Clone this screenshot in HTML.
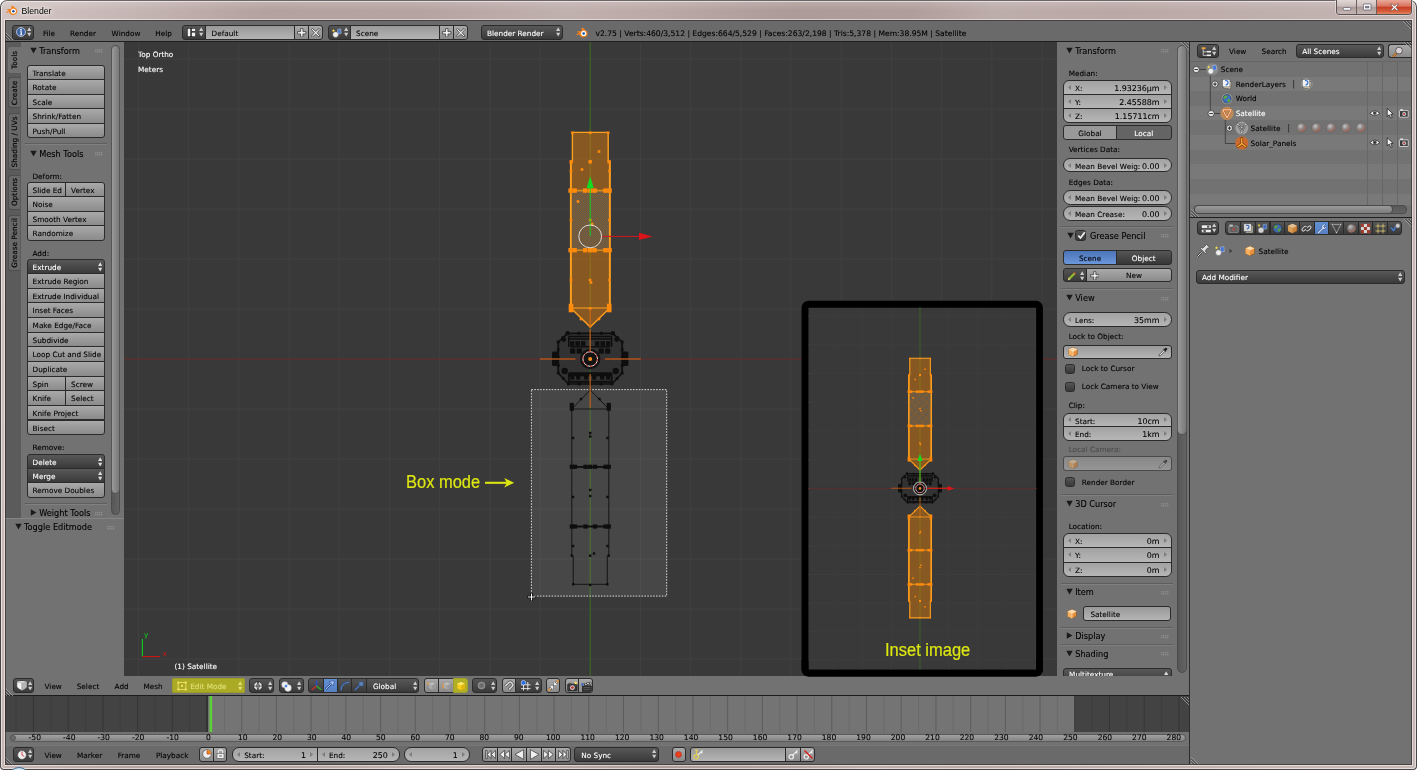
<!DOCTYPE html><html><head><meta charset="utf-8"><title>Blender</title><style>
html,body{margin:0;padding:0;background:#fff;}
body{width:1417px;height:770px;overflow:hidden;position:relative;font-family:"DejaVu Sans","Liberation Sans",sans-serif;}
div,svg{position:absolute;box-sizing:border-box;}
.t{font-size:7.3px;line-height:12px;white-space:nowrap;color:#000;-webkit-text-stroke:0.1px;}
.w{color:#fff;}
.g{color:#3c3c3c;}
.ph{font-size:8.2px;line-height:12px;white-space:nowrap;color:#000;-webkit-text-stroke:0.1px;}
.b,.m,.n,.f,.tg,.ts,.rd,.rs,.hb{border:1px solid #2b2b2b;font-size:7.3px;white-space:nowrap;overflow:hidden;color:#000;padding-left:5.1px;-webkit-text-stroke:0.1px;}
.b{background:linear-gradient(#a9a9a9,#8b8b8b);}
.m{background:linear-gradient(#585858,#3a3a3a);color:#fff;}
.n{background:linear-gradient(#a2a2a2,#b6b6b6);}
.f{background:linear-gradient(#999,#b4b4b4);}
.tg{background:#999;}
.ts{background:#646464;color:#fff;}
.rd{background:linear-gradient(#555,#373737);color:#fff;}
.rs{background:linear-gradient(#4c74b8,#6b97db);color:#000;}
.hb{background:linear-gradient(#555,#3a3a3a);}
.cb{border:1px solid #2b2b2b;background:linear-gradient(#555,#383838);border-radius:2.5px;}
.sep{height:1px;background:#5e5e5e;border-bottom:1px solid #808080;height:2px;}
.grip{width:9px;height:4px;background-image:radial-gradient(circle,#9a9a9a 0.5px,transparent 0.7px);background-size:2px 2px;opacity:.9}
</style></head><body><div id="win" style="left:0;top:0;width:1417px;height:770px;will-change:transform">
<div style="left:0;top:0;width:1417px;height:770px;border:1px solid #4a4545;border-top-color:#6e6666;border-radius:7px 7px 4px 4px;background:linear-gradient(180deg,rgba(255,255,255,.18) 0,rgba(255,255,255,0) 9px),linear-gradient(100deg,#d2c5c3 0px,#c9bab8 100px,#b4a2a0 260px,#b5a4a2 420px,#c0b0ae 560px,#bba9a7 650px,#ad9b99 780px,#b09e9c 900px,#bdadab 980px,#b9a8a6 1100px,#bfafad 1250px,#c6b7b5 1417px);box-shadow:inset 0 0 0 1px rgba(255,255,255,.55)"></div>
<div style="left:5px;top:20px;width:1407px;height:745px;box-shadow:0 0 0 1px rgba(255,255,255,.5);background:#727272"></div>
<svg style="left:6px;top:4.9px" width="13" height="11" viewBox="0 0 13 11"><path d="M6.2 0.6L9.9 3.6C11.6 5 11.6 7.6 10 9C8.4 10.4 5.8 10.4 4.2 9C3.4 8.3 3 7.4 3 6.5L0.8 8.2L0.3 7.2L3.1 5.1H1.2V4.1H4.6L5.9 3.1L5.2 2.5V1.4z" fill="#f5811e"/><circle cx="7.4" cy="6.2" r="2.5" fill="#fff"/><circle cx="7.4" cy="6.2" r="1.25" fill="#1b4f9c"/></svg>
<div style="left:21.5px;top:4.8px;font:8.7px/13px 'Liberation Sans',sans-serif;color:#000;text-shadow:0 0 4px #fff,0 0 6px #fff">Blender</div>
<div style="left:1336px;top:0;width:76px;height:15px;border:1px solid #5b5252;border-top:none;border-radius:0 0 4px 4px;overflow:hidden;box-shadow:0 0 0 1px rgba(255,255,255,.4)"><div style="left:0;top:0;width:20px;height:14px;background:linear-gradient(#e3d8d6,#c9bbb9 45%,#ab9a98 50%,#c5b6b4);border-right:1px solid #6b6161"></div><div style="left:20px;top:0;width:20px;height:14px;background:linear-gradient(#e3d8d6,#c9bbb9 45%,#ab9a98 50%,#c5b6b4);border-right:1px solid #6b6161"></div><div style="left:40px;top:0;width:35px;height:14px;background:linear-gradient(#e9a999,#d9715c 45%,#c43c22 50%,#d8623f 85%,#e08a66)"></div><svg style="left:0;top:0" width="75" height="14" viewBox="0 0 75 14"><rect x="6.2" y="7.6" width="7.6" height="2.6" rx="1" fill="#fff" stroke="#555066" stroke-width="0.7"/><rect x="26.4" y="4" width="7.6" height="6" rx="0.8" fill="#fff" stroke="#555066" stroke-width="0.7"/><rect x="28.6" y="6.2" width="3.4" height="1.8" fill="#8d8590" stroke="#555066" stroke-width="0.5"/><path d="M53.3 4.2L55.6 4.2L57.5 6.2L59.4 4.2L61.7 4.2L58.9 7.3L61.7 10.4L59.4 10.4L57.5 8.4L55.6 10.4L53.3 10.4L56.1 7.3z" fill="#fff" stroke="#5b3b3b" stroke-width="0.6"/></svg></div>
<div style="left:8px;top:766.5px;width:22px;height:22px;border-radius:50%;background:radial-gradient(circle at 50% 30%,#eef6fb,#b7d3e6 60%,#5a8fb8);border:1px solid #3f6f96"></div>
<div class="" style="left:5px;top:21px;width:1407px;height:20px;background:#6a6a6a"></div>
<div class="" style="left:5px;top:41px;width:1407px;height:1px;background:#1f1f1f"></div>
<svg style="left:5px;top:30px" width="10" height="10" viewBox="0 0 10 10"><path d="M0 2L8 10M0 5L5 10M0 8L2 10" stroke="#a4a4a4" stroke-width="0.8" fill="none"/><path d="M0 3.5L6.5 10M0 6.5L3.5 10" stroke="#333" stroke-width="0.8" fill="none"/></svg>
<svg style="left:1401px;top:21px" width="10" height="10" viewBox="0 0 10 10"><path d="M2 0L10 8M5 0L10 5M8 0L10 2" stroke="#a4a4a4" stroke-width="0.8" fill="none"/><path d="M3.5 0L10 6.5M6.5 0L10 3.5" stroke="#333" stroke-width="0.8" fill="none"/></svg>
<div class="hb" style="left:12px;top:25px;width:22px;height:14.5px;line-height:15.2px;border-radius:3px;padding:0"><svg style="left:2.5px;top:1.4px" width="10" height="10" viewBox="0 0 10 10"><circle cx="5" cy="5" r="4.5" fill="#3c62a6" stroke="#cfd8ea" stroke-width="0.8"/><circle cx="5" cy="2.7" r="0.9" fill="#fff"/><path d="M4.1 4.2H5.8V7.6H6.5V8.3H3.8V7.6H4.6V4.9H4.1z" fill="#fff"/></svg><svg style="right:1.4px;top:50%;margin-top:-4.9px" width="4.4" height="9.8" viewBox="0 0 4.4 9.8"><path d="M2.2 0.2L4.3 4H0.1zM2.2 9.6L4.3 5.8H0.1z" fill="#ccc"/></svg></div>
<div class="t" style="left:49px;top:28px;transform:translateX(-50%)">File</div>
<div class="t" style="left:83px;top:28px;transform:translateX(-50%)">Render</div>
<div class="t" style="left:126px;top:28px;transform:translateX(-50%)">Window</div>
<div class="t" style="left:163.5px;top:28px;transform:translateX(-50%)">Help</div>
<div class="hb" style="left:182px;top:25px;width:24px;height:14.5px;line-height:15.2px;border-radius:3px 0 0 3px;padding:0"><svg style="left:3.5px;top:2.2px" width="9" height="9" viewBox="0 0 9 9"><rect x="0.3" y="0.3" width="3.4" height="8.4" fill="#f4f4f4" stroke="#222" stroke-width="0.6"/><rect x="4.6" y="0.3" width="4" height="3" fill="#f4f4f4" stroke="#222" stroke-width="0.6"/><rect x="4.6" y="4.2" width="4" height="4.5" fill="#f4f4f4" stroke="#222" stroke-width="0.6"/></svg><svg style="right:1.2px;top:50%;margin-top:-4.9px" width="4.4" height="9.8" viewBox="0 0 4.4 9.8"><path d="M2.2 0.2L4.3 4H0.1zM2.2 9.6L4.3 5.8H0.1z" fill="#ccc"/></svg></div>
<div class="f" style="left:205px;top:25px;width:90px;height:14.5px;line-height:15.2px;border-radius:0;padding-left:5.6px">Default</div>
<div class="b" style="left:294px;top:25px;width:15px;height:14.5px;line-height:15.2px;border-radius:0;padding:0"><svg style="left:2px;top:1.6px" width="9.5" height="9.5" viewBox="0 0 8 8"><path d="M3 0.5H5V3H7.5V5H5V7.5H3V5H0.5V3H3z" fill="#f2f2f2" stroke="#2e2e2e" stroke-width="0.6"/></svg></div>
<div class="b" style="left:308px;top:25px;width:14.5px;height:14.5px;line-height:15.2px;border-radius:0 3px 3px 0;padding:0"><svg style="left:2px;top:1.6px" width="9.5" height="9.5" viewBox="0 0 8 8"><path d="M1.2 0.4L4 2.9L6.8 0.4L7.6 1.2L5.1 4L7.6 6.8L6.8 7.6L4 5.1L1.2 7.6L0.4 6.8L2.9 4L0.4 1.2z" fill="#f6f6f6" stroke="#2a2a2a" stroke-width="0.6"/></svg></div>
<div class="hb" style="left:327.5px;top:25px;width:23px;height:14.5px;line-height:15.2px;border-radius:3px 0 0 3px;padding:0"><svg style="left:3px;top:1.8px" width="10" height="10" viewBox="0 0 10 10"><circle cx="3.6" cy="6.6" r="2.9" fill="#eee" stroke="#555" stroke-width="0.5"/><path d="M5.5 1.5L8.8 0.8L9.2 5.5L5.9 5.8z" fill="#4a78c8" stroke="#dde" stroke-width="0.4"/><path d="M1.5 0.8L2 2L3.2 2.2L2.2 2.9L2.4 4.1L1.5 3.4L0.5 4L0.8 2.9L0 2.1L1.1 2z" fill="#f5d84a"/></svg><svg style="right:1.2px;top:50%;margin-top:-4.9px" width="4.4" height="9.8" viewBox="0 0 4.4 9.8"><path d="M2.2 0.2L4.3 4H0.1zM2.2 9.6L4.3 5.8H0.1z" fill="#ccc"/></svg></div>
<div class="f" style="left:349.5px;top:25px;width:90.5px;height:14.5px;line-height:15.2px;border-radius:0;padding-left:5.6px">Scene</div>
<div class="b" style="left:439px;top:25px;width:15px;height:14.5px;line-height:15.2px;border-radius:0;padding:0"><svg style="left:2px;top:1.6px" width="9.5" height="9.5" viewBox="0 0 8 8"><path d="M3 0.5H5V3H7.5V5H5V7.5H3V5H0.5V3H3z" fill="#f2f2f2" stroke="#2e2e2e" stroke-width="0.6"/></svg></div>
<div class="b" style="left:453px;top:25px;width:14.5px;height:14.5px;line-height:15.2px;border-radius:0 3px 3px 0;padding:0"><svg style="left:2px;top:1.6px" width="9.5" height="9.5" viewBox="0 0 8 8"><path d="M1.2 0.4L4 2.9L6.8 0.4L7.6 1.2L5.1 4L7.6 6.8L6.8 7.6L4 5.1L1.2 7.6L0.4 6.8L2.9 4L0.4 1.2z" fill="#f6f6f6" stroke="#2a2a2a" stroke-width="0.6"/></svg></div>
<div class="m" style="left:481px;top:25px;width:81.5px;height:14.5px;line-height:15.2px;border-radius:3px;padding-left:5px">Blender Render<svg style="right:1.4px;top:50%;margin-top:-4.9px" width="4.4" height="9.8" viewBox="0 0 4.4 9.8"><path d="M2.2 0.2L4.3 4H0.1zM2.2 9.6L4.3 5.8H0.1z" fill="#ccc"/></svg></div>
<svg style="left:575.5px;top:27px" width="13.5" height="11.4" viewBox="0 0 13 11"><path d="M6.2 0.6L9.9 3.6C11.6 5 11.6 7.6 10 9C8.4 10.4 5.8 10.4 4.2 9C3.4 8.3 3 7.4 3 6.5L0.8 8.2L0.3 7.2L3.1 5.1H1.2V4.1H4.6L5.9 3.1L5.2 2.5V1.4z" fill="#f5811e"/><circle cx="7.4" cy="6.2" r="2.5" fill="#fff"/><circle cx="7.4" cy="6.2" r="1.25" fill="#1b4f9c"/></svg>
<div class="t" style="left:595.5px;top:28px;font-size:7.6px">v2.75 | Verts:460/3,512 | Edges:664/5,529 | Faces:263/2,198 | Tris:5,378 | Mem:38.95M | Satellite</div>
<div class="" style="left:5px;top:42px;width:15.5px;height:476px;background:#5b5b5b"></div>
<div class="" style="left:20.5px;top:42px;width:103.5px;height:476px;background:#727272"></div>
<div class="" style="left:8px;top:47px;width:12.5px;height:25.5px;background:#727272;border:1px solid #727272;border-right:none;border-radius:3px 0 0 3px"></div>
<div class="t" style="left:14.5px;top:59.75px;width:0;height:0;overflow:visible"><div class="t" style="left:0;top:0;transform:translate(-50%,-50%) rotate(-90deg);color:#000">Tools</div></div>
<div class="" style="left:8px;top:77px;width:12px;height:31px;background:#686868;border:1px solid #4e4e4e;border-right:none;border-radius:3px 0 0 3px"></div>
<div class="t" style="left:14.5px;top:92.5px;width:0;height:0;overflow:visible"><div class="t" style="left:0;top:0;transform:translate(-50%,-50%) rotate(-90deg);color:#000">Create</div></div>
<div class="" style="left:8px;top:113px;width:12px;height:57px;background:#686868;border:1px solid #4e4e4e;border-right:none;border-radius:3px 0 0 3px"></div>
<div class="t" style="left:14.5px;top:141.5px;width:0;height:0;overflow:visible"><div class="t" style="left:0;top:0;transform:translate(-50%,-50%) rotate(-90deg);color:#000">Shading / UVs</div></div>
<div class="" style="left:8px;top:174.5px;width:12px;height:35.5px;background:#686868;border:1px solid #4e4e4e;border-right:none;border-radius:3px 0 0 3px"></div>
<div class="t" style="left:14.5px;top:192.25px;width:0;height:0;overflow:visible"><div class="t" style="left:0;top:0;transform:translate(-50%,-50%) rotate(-90deg);color:#000">Options</div></div>
<div class="" style="left:8px;top:214.5px;width:12px;height:56px;background:#686868;border:1px solid #4e4e4e;border-right:none;border-radius:3px 0 0 3px"></div>
<div class="t" style="left:14.5px;top:242.5px;width:0;height:0;overflow:visible"><div class="t" style="left:0;top:0;transform:translate(-50%,-50%) rotate(-90deg);color:#000">Grease Pencil</div></div>
<svg style="left:29.7px;top:46.7px" width="7" height="7" viewBox="0 0 7 7"><path d="M0.3 0.8H6.7L3.5 6.4z" fill="#1a1a1a"/></svg>
<div class="ph" style="left:39.2px;top:45px;">Transform</div>
<svg style="left:94.5px;top:49.2px" width="9" height="5" viewBox="0 0 9 5"><g fill="#a2a2a2"><rect x="0.3" y="0.3" width="1" height="1"/><rect x="0.3" y="2.3" width="1" height="1"/><rect x="2.3" y="0.3" width="1" height="1"/><rect x="2.3" y="2.3" width="1" height="1"/><rect x="4.3" y="0.3" width="1" height="1"/><rect x="4.3" y="2.3" width="1" height="1"/><rect x="6.3" y="0.3" width="1" height="1"/><rect x="6.3" y="2.3" width="1" height="1"/></g></svg>
<div class="b" style="left:26.5px;top:64.5px;width:78.5px;height:15.4px;line-height:16.1px;border-radius:3px 3px 0 0;">Translate</div>
<div class="b" style="left:26.5px;top:78.9px;width:78.5px;height:15.64px;line-height:16.34px;border-radius:0;">Rotate</div>
<div class="b" style="left:26.5px;top:93.54px;width:78.5px;height:15.64px;line-height:16.34px;border-radius:0;">Scale</div>
<div class="b" style="left:26.5px;top:108.18px;width:78.5px;height:15.64px;line-height:16.34px;border-radius:0;">Shrink/Fatten</div>
<div class="b" style="left:26.5px;top:122.82px;width:78.5px;height:15.64px;line-height:16.34px;border-radius:0 0 3px 3px;">Push/Pull</div>
<div class="sep" style="left:24.5px;top:143.2px;width:82.5px"></div>
<svg style="left:29.7px;top:149.7px" width="7" height="7" viewBox="0 0 7 7"><path d="M0.3 0.8H6.7L3.5 6.4z" fill="#1a1a1a"/></svg>
<div class="ph" style="left:39.2px;top:148px;">Mesh Tools</div>
<svg style="left:94.5px;top:152.2px" width="9" height="5" viewBox="0 0 9 5"><g fill="#a2a2a2"><rect x="0.3" y="0.3" width="1" height="1"/><rect x="0.3" y="2.3" width="1" height="1"/><rect x="2.3" y="0.3" width="1" height="1"/><rect x="2.3" y="2.3" width="1" height="1"/><rect x="4.3" y="0.3" width="1" height="1"/><rect x="4.3" y="2.3" width="1" height="1"/><rect x="6.3" y="0.3" width="1" height="1"/><rect x="6.3" y="2.3" width="1" height="1"/></g></svg>
<div class="t" style="left:32.5px;top:171px;">Deform:</div>
<div class="b" style="left:26.5px;top:182px;width:39.5px;height:15px;line-height:15.7px;border-radius:3px 0 0 0;">Slide Ed</div>
<div class="b" style="left:65px;top:182px;width:40px;height:15px;line-height:15.7px;border-radius:0 3px 0 0;">Vertex</div>
<div class="b" style="left:26.5px;top:196px;width:78.5px;height:15.64px;line-height:16.34px;border-radius:0;">Noise</div>
<div class="b" style="left:26.5px;top:210.65px;width:78.5px;height:15.64px;line-height:16.34px;border-radius:0;">Smooth Vertex</div>
<div class="b" style="left:26.5px;top:225.3px;width:78.5px;height:15.64px;line-height:16.34px;border-radius:0 0 3px 3px;">Randomize</div>
<div class="t" style="left:32.5px;top:248px;">Add:</div>
<div class="m" style="left:26.5px;top:259.1px;width:78.5px;height:15px;line-height:15.7px;border-radius:3px 3px 0 0;">Extrude<svg style="right:1.9px;top:50%;margin-top:-4.9px" width="4.4" height="9.8" viewBox="0 0 4.4 9.8"><path d="M2.2 0.2L4.3 4H0.1zM2.2 9.6L4.3 5.8H0.1z" fill="#ddd"/></svg></div>
<div class="b" style="left:26.5px;top:273.1px;width:78.5px;height:15.64px;line-height:16.34px;border-radius:0;">Extrude Region</div>
<div class="b" style="left:26.5px;top:287.74px;width:78.5px;height:15.64px;line-height:16.34px;border-radius:0;">Extrude Individual</div>
<div class="b" style="left:26.5px;top:302.38px;width:78.5px;height:15.64px;line-height:16.34px;border-radius:0;">Inset Faces</div>
<div class="b" style="left:26.5px;top:317.02px;width:78.5px;height:15.64px;line-height:16.34px;border-radius:0;">Make Edge/Face</div>
<div class="b" style="left:26.5px;top:331.66px;width:78.5px;height:15.64px;line-height:16.34px;border-radius:0;">Subdivide</div>
<div class="b" style="left:26.5px;top:346.3px;width:78.5px;height:15.64px;line-height:16.34px;border-radius:0;">Loop Cut and Slide</div>
<div class="b" style="left:26.5px;top:360.94px;width:78.5px;height:15.64px;line-height:16.34px;border-radius:0;">Duplicate</div>
<div class="b" style="left:26.5px;top:375.58px;width:39.5px;height:15.64px;line-height:16.34px;border-radius:0;">Spin</div>
<div class="b" style="left:65px;top:375.58px;width:40px;height:15.64px;line-height:16.34px;border-radius:0;">Screw</div>
<div class="b" style="left:26.5px;top:390.22px;width:39.5px;height:15.64px;line-height:16.34px;border-radius:0;">Knife</div>
<div class="b" style="left:65px;top:390.22px;width:40px;height:15.64px;line-height:16.34px;border-radius:0;">Select</div>
<div class="b" style="left:26.5px;top:404.86px;width:78.5px;height:15.64px;line-height:16.34px;border-radius:0;">Knife Project</div>
<div class="b" style="left:26.5px;top:419.5px;width:78.5px;height:15.64px;line-height:16.34px;border-radius:0 0 3px 3px;">Bisect</div>
<div class="t" style="left:32.5px;top:442px;">Remove:</div>
<div class="m" style="left:26.5px;top:453.9px;width:78.5px;height:15.2px;line-height:15.9px;border-radius:3px 3px 0 0;">Delete<svg style="right:1.9px;top:50%;margin-top:-4.9px" width="4.4" height="9.8" viewBox="0 0 4.4 9.8"><path d="M2.2 0.2L4.3 4H0.1zM2.2 9.6L4.3 5.8H0.1z" fill="#ddd"/></svg></div>
<div class="m" style="left:26.5px;top:468.1px;width:78.5px;height:15.2px;line-height:15.9px;border-radius:0;">Merge<svg style="right:1.9px;top:50%;margin-top:-4.9px" width="4.4" height="9.8" viewBox="0 0 4.4 9.8"><path d="M2.2 0.2L4.3 4H0.1zM2.2 9.6L4.3 5.8H0.1z" fill="#ddd"/></svg></div>
<div class="b" style="left:26.5px;top:482.3px;width:78.5px;height:15.4px;line-height:16.1px;border-radius:0 0 3px 3px;">Remove Doubles</div>
<div class="sep" style="left:24.5px;top:503.2px;width:82.5px"></div>
<svg style="left:29.7px;top:509.2px" width="7" height="7" viewBox="0 0 7 7"><path d="M0.8 0.3V6.7L6.4 3.5z" fill="#1a1a1a"/></svg>
<div class="ph" style="left:39.2px;top:507px;">Weight Tools</div>
<svg style="left:94.5px;top:511.7px" width="9" height="5" viewBox="0 0 9 5"><g fill="#a2a2a2"><rect x="0.3" y="0.3" width="1" height="1"/><rect x="0.3" y="2.3" width="1" height="1"/><rect x="2.3" y="0.3" width="1" height="1"/><rect x="2.3" y="2.3" width="1" height="1"/><rect x="4.3" y="0.3" width="1" height="1"/><rect x="4.3" y="2.3" width="1" height="1"/><rect x="6.3" y="0.3" width="1" height="1"/><rect x="6.3" y="2.3" width="1" height="1"/></g></svg>
<div class="" style="left:111px;top:45px;width:9.3px;height:470px;background:linear-gradient(90deg,#575757,#636363);border-radius:5px;border:1px solid #4c4c4c"></div>
<div class="" style="left:111px;top:45px;width:9.3px;height:449px;background:linear-gradient(90deg,#9a9a9a,#858585 60%,#7a7a7a);border-radius:5px;border:1px solid #565656"></div>
<div class="" style="left:5px;top:518px;width:119px;height:158px;background:#727272;border-top:1px solid #858585"></div>
<svg style="left:14.7px;top:523.1px" width="7" height="7" viewBox="0 0 7 7"><path d="M0.3 0.8H6.7L3.5 6.4z" fill="#1a1a1a"/></svg>
<div class="ph" style="left:24px;top:521px;">Toggle Editmode</div>
<svg style="left:107px;top:525.6px" width="9" height="5" viewBox="0 0 9 5"><g fill="#a2a2a2"><rect x="0.3" y="0.3" width="1" height="1"/><rect x="0.3" y="2.3" width="1" height="1"/><rect x="2.3" y="0.3" width="1" height="1"/><rect x="2.3" y="2.3" width="1" height="1"/><rect x="4.3" y="0.3" width="1" height="1"/><rect x="4.3" y="2.3" width="1" height="1"/><rect x="6.3" y="0.3" width="1" height="1"/><rect x="6.3" y="2.3" width="1" height="1"/></g></svg>
<svg style="left:124px;top:42px" width="933" height="634" viewBox="124 42 933 634"><rect x="124" y="42" width="933" height="634" fill="#393939"/><path d="M138.4 42V676M188.6 42V676M238.8 42V676M289.0 42V676M339.2 42V676M389.4 42V676M439.6 42V676M489.8 42V676M540.0 42V676M590.2 42V676M640.4 42V676M690.6 42V676M740.8 42V676M791.0 42V676M841.2 42V676M891.4 42V676M941.6 42V676M991.8 42V676M1042.0 42V676M124 59.1H1057M124 109.1H1057M124 159.1H1057M124 209.1H1057M124 259.1H1057M124 309.1H1057M124 359.1H1057M124 409.1H1057M124 459.1H1057M124 509.1H1057M124 559.1H1057M124 609.1H1057M124 659.1H1057" stroke="#414141" stroke-width="1" fill="none"/><path d="M124 359H1058" stroke="#632927" stroke-width="1.2"/><path d="M590.2 42V676" stroke="#3a6a24" stroke-width="1"/><defs><pattern id="stip" width="2" height="2" patternUnits="userSpaceOnUse"><rect width="2" height="2" fill="#5e5a54"/><rect width="1" height="1" fill="#865c2a"/><rect x="1" y="1" width="1" height="1" fill="#865c2a"/></pattern></defs><path d="M572.4 132.4H608.2V161.8H609.8V308L590.2 327L570.8 308V161.8H572.4z" fill="rgba(255,136,0,0.40)" stroke="#ffa01c" stroke-width="1.4" stroke-linejoin="round"/><rect x="571.5" y="191" width="37.6" height="59" fill="url(#stip)"/><path d="M570.8 308H609.8" stroke="#ffa01c" stroke-width="1" fill="none"/><path d="M569.5 190.6H611M569.5 250.3H611" stroke="#d88a1a" stroke-width="1.6" fill="none"/><path d="M570.8 161.8V308M609.8 161.8V308" stroke="#ffa01c" stroke-width="1.8" fill="none"/><rect x="571.1" y="131.5" width="2.6" height="2.6" fill="#ff8a0c"/><rect x="588.9" y="131.5" width="2.6" height="2.6" fill="#ff8a0c"/><rect x="606.9" y="131.5" width="2.6" height="2.6" fill="#ff8a0c"/><rect x="597.7" y="150.2" width="2.6" height="2.6" fill="#ff8a0c"/><rect x="580.7" y="168.2" width="2.6" height="2.6" fill="#ff8a0c"/><rect x="588.9" y="160.5" width="2.6" height="2.6" fill="#ff8a0c"/><rect x="576.7" y="200.2" width="2.6" height="2.6" fill="#ff8a0c"/><rect x="588.9" y="218.7" width="2.6" height="2.6" fill="#ff8a0c"/><rect x="590.7" y="222.7" width="2.6" height="2.6" fill="#ff8a0c"/><rect x="569.7" y="169.7" width="2.6" height="2.6" fill="#ff8a0c"/><rect x="608.2" y="169.7" width="2.6" height="2.6" fill="#ff8a0c"/><rect x="569.7" y="218.7" width="2.6" height="2.6" fill="#ff8a0c"/><rect x="608.2" y="218.7" width="2.6" height="2.6" fill="#ff8a0c"/><rect x="569.7" y="278.7" width="2.6" height="2.6" fill="#ff8a0c"/><rect x="608.2" y="278.7" width="2.6" height="2.6" fill="#ff8a0c"/><rect x="588.7" y="278.7" width="2.6" height="2.6" fill="#ff8a0c"/><rect x="589.7" y="281.2" width="2.6" height="2.6" fill="#ff8a0c"/><rect x="579.7" y="317.7" width="2.6" height="2.6" fill="#ff8a0c"/><rect x="597.7" y="317.7" width="2.6" height="2.6" fill="#ff8a0c"/><rect x="588.9" y="324.7" width="2.6" height="2.6" fill="#ff8a0c"/><rect x="588.9" y="307.2" width="2.6" height="2.6" fill="#ff8a0c"/><rect x="569.5" y="160.1" width="3.4" height="3.4" fill="#ff8a0c"/><rect x="607.5" y="160.1" width="3.4" height="3.4" fill="#ff8a0c"/><rect x="588.5" y="160.1" width="3.4" height="3.4" fill="#ff8a0c"/><rect x="568.4" y="188.4" width="4.4" height="4.4" fill="#ff8a0c"/><rect x="572.4" y="188.4" width="4.4" height="4.4" fill="#ff8a0c"/><rect x="583.0" y="188.4" width="4.4" height="4.4" fill="#ff8a0c"/><rect x="588.0" y="188.4" width="4.4" height="4.4" fill="#ff8a0c"/><rect x="592.4" y="188.4" width="4.4" height="4.4" fill="#ff8a0c"/><rect x="603.2" y="188.4" width="4.4" height="4.4" fill="#ff8a0c"/><rect x="607.4" y="188.4" width="4.4" height="4.4" fill="#ff8a0c"/><rect x="568.4" y="248.0" width="4.4" height="4.4" fill="#ff8a0c"/><rect x="572.4" y="248.0" width="4.4" height="4.4" fill="#ff8a0c"/><rect x="583.0" y="248.0" width="4.4" height="4.4" fill="#ff8a0c"/><rect x="588.0" y="248.0" width="4.4" height="4.4" fill="#ff8a0c"/><rect x="592.4" y="248.0" width="4.4" height="4.4" fill="#ff8a0c"/><rect x="603.2" y="248.0" width="4.4" height="4.4" fill="#ff8a0c"/><rect x="607.4" y="248.0" width="4.4" height="4.4" fill="#ff8a0c"/><rect x="568.7" y="303.7" width="4.6" height="4.6" fill="#ff8a0c"/><rect x="606.9" y="303.7" width="4.6" height="4.6" fill="#ff8a0c"/><rect x="568.7" y="307.7" width="4.6" height="4.6" fill="#ff8a0c"/><rect x="606.9" y="307.7" width="4.6" height="4.6" fill="#ff8a0c"/><path d="M590.2 309V327" stroke="#c8621a" stroke-width="1.3"/><path d="M590.2 188V236" stroke="#14d21e" stroke-width="1"/><path d="M590.2 176.3L593.8 188.3H586.6z" fill="#12dc22"/><path d="M601.5 236.4H640" stroke="#d4151c" stroke-width="1"/><path d="M652.6 236.4L639 232.8V240z" fill="#dc141c"/><circle cx="590.2" cy="236.4" r="11.4" fill="none" stroke="#e8e8e8" stroke-width="0.9"/><rect x="531.4" y="389.6" width="135.3" height="206.5" fill="rgba(255,255,255,0.075)" stroke="#d8d8d8" stroke-width="1" stroke-dasharray="1.6 1.3"/><path d="M590.2 390L571.8 409H608.8L590.2 390M571.8 409V555.7M608.8 409V555.7M571.8 466.8H608.8M571.8 526.5H608.8M573.2 555.7V584.3H607.3V555.7" stroke="#0e0e0e" stroke-width="0.9" fill="none"/><path d="M570.5 466.8H610M570.5 526.5H610" stroke="#0e0e0e" stroke-width="1.8" fill="none"/><rect x="579.8" y="397.8" width="2.4" height="2.4" fill="#0e0e0e"/><rect x="598.3" y="397.8" width="2.4" height="2.4" fill="#0e0e0e"/><rect x="589.0" y="431.8" width="2.4" height="2.4" fill="#0e0e0e"/><rect x="589.0" y="435.3" width="2.4" height="2.4" fill="#0e0e0e"/><rect x="571.8" y="436.8" width="2.4" height="2.4" fill="#0e0e0e"/><rect x="606.3" y="436.8" width="2.4" height="2.4" fill="#0e0e0e"/><rect x="589.0" y="488.8" width="2.4" height="2.4" fill="#0e0e0e"/><rect x="589.0" y="494.8" width="2.4" height="2.4" fill="#0e0e0e"/><rect x="571.8" y="495.8" width="2.4" height="2.4" fill="#0e0e0e"/><rect x="606.3" y="495.8" width="2.4" height="2.4" fill="#0e0e0e"/><rect x="570.6" y="554.5" width="2.4" height="2.4" fill="#0e0e0e"/><rect x="607.6" y="554.5" width="2.4" height="2.4" fill="#0e0e0e"/><rect x="589.0" y="554.5" width="2.4" height="2.4" fill="#0e0e0e"/><rect x="592.8" y="552.3" width="2.4" height="2.4" fill="#0e0e0e"/><rect x="572.0" y="583.1" width="2.4" height="2.4" fill="#0e0e0e"/><rect x="606.1" y="583.1" width="2.4" height="2.4" fill="#0e0e0e"/><rect x="589.0" y="583.8" width="2.4" height="2.4" fill="#0e0e0e"/><rect x="571.8" y="544.8" width="2.4" height="2.4" fill="#0e0e0e"/><rect x="606.3" y="544.8" width="2.4" height="2.4" fill="#0e0e0e"/><rect x="569.7" y="464.7" width="4.2" height="4.2" fill="#0e0e0e"/><rect x="572.9" y="464.7" width="4.2" height="4.2" fill="#0e0e0e"/><rect x="583.4" y="464.7" width="4.2" height="4.2" fill="#0e0e0e"/><rect x="588.1" y="464.7" width="4.2" height="4.2" fill="#0e0e0e"/><rect x="592.9" y="464.7" width="4.2" height="4.2" fill="#0e0e0e"/><rect x="603.4" y="464.7" width="4.2" height="4.2" fill="#0e0e0e"/><rect x="606.7" y="464.7" width="4.2" height="4.2" fill="#0e0e0e"/><rect x="569.7" y="524.4" width="4.2" height="4.2" fill="#0e0e0e"/><rect x="572.9" y="524.4" width="4.2" height="4.2" fill="#0e0e0e"/><rect x="583.4" y="524.4" width="4.2" height="4.2" fill="#0e0e0e"/><rect x="592.9" y="524.4" width="4.2" height="4.2" fill="#0e0e0e"/><rect x="603.4" y="524.4" width="4.2" height="4.2" fill="#0e0e0e"/><rect x="606.7" y="524.4" width="4.2" height="4.2" fill="#0e0e0e"/><rect x="569.7" y="406.5" width="4.2" height="4.2" fill="#0e0e0e"/><rect x="606.7" y="406.5" width="4.2" height="4.2" fill="#0e0e0e"/><rect x="569.7" y="402.9" width="4.2" height="4.2" fill="#0e0e0e"/><rect x="606.7" y="402.9" width="4.2" height="4.2" fill="#0e0e0e"/><path d="M527.5 597H535.5M531.5 593V601" stroke="#000" stroke-width="2.6"/><path d="M528 597H535M531.5 593.5V600.5" stroke="#fff" stroke-width="1.1"/><path d="M567.6 333.3 L612.8 333.3 L622.2 342.0 L622.2 373.0 L612.0 384.0 L568.4 384.0 L558.2 373.0 L558.2 342.0 z" fill="rgba(0,0,0,0.12)" stroke="#0e0e0e" stroke-width="1.70" stroke-linejoin="round"/><rect x="566.2" y="331.9" width="2.8" height="2.8" fill="#0e0e0e"/><rect x="577.5" y="331.9" width="2.8" height="2.8" fill="#0e0e0e"/><rect x="588.8" y="331.9" width="2.8" height="2.8" fill="#0e0e0e"/><rect x="600.1" y="331.9" width="2.8" height="2.8" fill="#0e0e0e"/><rect x="611.4" y="331.9" width="2.8" height="2.8" fill="#0e0e0e"/><rect x="616.1" y="336.2" width="2.8" height="2.8" fill="#0e0e0e"/><rect x="620.8" y="340.6" width="2.8" height="2.8" fill="#0e0e0e"/><rect x="620.8" y="348.4" width="2.8" height="2.8" fill="#0e0e0e"/><rect x="620.8" y="356.1" width="2.8" height="2.8" fill="#0e0e0e"/><rect x="620.8" y="363.9" width="2.8" height="2.8" fill="#0e0e0e"/><rect x="620.8" y="371.6" width="2.8" height="2.8" fill="#0e0e0e"/><rect x="615.7" y="377.1" width="2.8" height="2.8" fill="#0e0e0e"/><rect x="610.6" y="382.6" width="2.8" height="2.8" fill="#0e0e0e"/><rect x="599.7" y="382.6" width="2.8" height="2.8" fill="#0e0e0e"/><rect x="588.8" y="382.6" width="2.8" height="2.8" fill="#0e0e0e"/><rect x="577.9" y="382.6" width="2.8" height="2.8" fill="#0e0e0e"/><rect x="567.0" y="382.6" width="2.8" height="2.8" fill="#0e0e0e"/><rect x="561.9" y="377.1" width="2.8" height="2.8" fill="#0e0e0e"/><rect x="556.8" y="371.6" width="2.8" height="2.8" fill="#0e0e0e"/><rect x="556.8" y="363.9" width="2.8" height="2.8" fill="#0e0e0e"/><rect x="556.8" y="356.1" width="2.8" height="2.8" fill="#0e0e0e"/><rect x="556.8" y="348.4" width="2.8" height="2.8" fill="#0e0e0e"/><rect x="556.8" y="340.6" width="2.8" height="2.8" fill="#0e0e0e"/><rect x="561.5" y="336.2" width="2.8" height="2.8" fill="#0e0e0e"/><path d="M568.7 336.4 H611.7 M568.7 339.0 H611.7" fill="none" stroke="#0e0e0e" stroke-width="1.53"/><path d="M568.7 336.4 V347.0 M611.7 336.4 V347.0 M570.2 346.7 H610.2" fill="none" stroke="#0e0e0e" stroke-width="1.36"/><rect x="569.9" y="341.2" width="4.6" height="4.6" fill="#0e0e0e"/><rect x="575.4" y="341.2" width="4.6" height="4.6" fill="#0e0e0e"/><rect x="580.9" y="341.2" width="4.6" height="4.6" fill="#0e0e0e"/><rect x="594.9" y="341.2" width="4.6" height="4.6" fill="#0e0e0e"/><rect x="600.4" y="341.2" width="4.6" height="4.6" fill="#0e0e0e"/><rect x="605.9" y="341.2" width="4.6" height="4.6" fill="#0e0e0e"/><rect x="570.1" y="348.4" width="5.2" height="5.2" fill="#0e0e0e"/><rect x="576.6" y="348.4" width="5.2" height="5.2" fill="#0e0e0e"/><rect x="598.6" y="348.4" width="5.2" height="5.2" fill="#0e0e0e"/><rect x="605.1" y="348.4" width="5.2" height="5.2" fill="#0e0e0e"/><rect x="570.1" y="375.4" width="4.2" height="4.2" fill="#0e0e0e"/><rect x="576.1" y="375.4" width="4.2" height="4.2" fill="#0e0e0e"/><rect x="584.1" y="375.4" width="4.2" height="4.2" fill="#0e0e0e"/><rect x="592.1" y="375.4" width="4.2" height="4.2" fill="#0e0e0e"/><rect x="600.1" y="375.4" width="4.2" height="4.2" fill="#0e0e0e"/><rect x="606.1" y="375.4" width="4.2" height="4.2" fill="#0e0e0e"/><path d="M568.7 373.2 H611.7 M568.7 381.8 H611.7 M568.7 375.2 H611.7" fill="none" stroke="#0e0e0e" stroke-width="1.87"/><path d="M568.7 373.2 V383.0 M611.7 373.2 V383.0" fill="none" stroke="#0e0e0e" stroke-width="1.70"/><rect x="552.0" y="351.5" width="6.4" height="14.5" rx="1.5" fill="#0e0e0e"/><circle cx="564.7" cy="371.0" r="3.2" fill="#0e0e0e"/><circle cx="563.7" cy="339.5" r="2.4" fill="#0e0e0e"/><circle cx="567.6" cy="333.3" r="2.2" fill="#0e0e0e"/><rect x="622.0" y="351.5" width="6.4" height="14.5" rx="1.5" fill="#0e0e0e"/><circle cx="615.7" cy="371.0" r="3.2" fill="#0e0e0e"/><circle cx="616.7" cy="339.5" r="2.4" fill="#0e0e0e"/><circle cx="612.8" cy="333.3" r="2.2" fill="#0e0e0e"/><circle cx="590.2" cy="359.0" r="10.2" fill="#131313"/><path d="M540 359H575.5M605 359H640.8M590.2 329V351.5M590.2 374V407.5" stroke="#ab561c" stroke-width="1.4" fill="none"/><circle cx="590.2" cy="359" r="7.3" fill="none" stroke="#e8e8e8" stroke-width="1"/><circle cx="590.2" cy="359" r="7.3" fill="none" stroke="#d01818" stroke-width="1" stroke-dasharray="2.3 2.3"/><circle cx="590.2" cy="359" r="2" fill="#f58a1a"/><path d="M142.4 639V656.6" stroke="#12c41c" stroke-width="1.2"/><path d="M142.4 656.6H160" stroke="#c41818" stroke-width="1.2"/><text x="144" y="636.5" font-family="DejaVu Sans,sans-serif" font-size="7.5" fill="#12c41c">y</text><text x="162.5" y="655.5" font-family="DejaVu Sans,sans-serif" font-size="7.5" fill="#c41818">x</text><path d="M485 482.8H508" stroke="#dce610" stroke-width="2.1"/><path d="M514.2 482.8L504.2 478.1L506.8 482.8L504.2 487.5z" fill="#dce610"/><rect x="805" y="304.2" width="234.5" height="369" rx="3.6" fill="#393939" stroke="#000" stroke-width="6.9"/><path d="M833.3 308V670M862.2 308V670M891.1 308V670M920.0 308V670M948.9 308V670M977.8 308V670M1006.7 308V670M1035.6 308V670M808.3 316.2H1036.2M808.3 344.9H1036.2M808.3 373.6H1036.2M808.3 402.3H1036.2M808.3 431.0H1036.2M808.3 459.7H1036.2M808.3 488.4H1036.2M808.3 517.1H1036.2M808.3 545.8H1036.2M808.3 574.5H1036.2M808.3 603.2H1036.2M808.3 631.9H1036.2M808.3 660.6H1036.2" stroke="#3d3d3d" stroke-width="1" fill="none"/><path d="M808 488.4H1037" stroke="#642a2a" stroke-width="0.8"/><path d="M920 307V670" stroke="#3a6a24" stroke-width="0.8"/><g transform="translate(920 488.4) scale(0.5746) translate(-590.2 -359)"><path d="M572.4 132.4H608.2V161.8H609.8V308L590.2 327L570.8 308V161.8H572.4z" fill="rgba(255,136,0,0.40)" stroke="#ffa01c" stroke-width="1.89" stroke-linejoin="round"/><rect x="571.5" y="191" width="37.6" height="59" fill="url(#stip)"/><path d="M570.8 308H609.8" stroke="#ffa01c" stroke-width="1.35" fill="none"/><path d="M569.5 190.6H611M569.5 250.3H611" stroke="#d88a1a" stroke-width="2.16" fill="none"/><path d="M570.8 161.8V308M609.8 161.8V308" stroke="#ffa01c" stroke-width="2.43" fill="none"/><rect x="571.1" y="131.5" width="2.6" height="2.6" fill="#ff8a0c"/><rect x="588.9" y="131.5" width="2.6" height="2.6" fill="#ff8a0c"/><rect x="606.9" y="131.5" width="2.6" height="2.6" fill="#ff8a0c"/><rect x="597.7" y="150.2" width="2.6" height="2.6" fill="#ff8a0c"/><rect x="580.7" y="168.2" width="2.6" height="2.6" fill="#ff8a0c"/><rect x="588.9" y="160.5" width="2.6" height="2.6" fill="#ff8a0c"/><rect x="576.7" y="200.2" width="2.6" height="2.6" fill="#ff8a0c"/><rect x="588.9" y="218.7" width="2.6" height="2.6" fill="#ff8a0c"/><rect x="590.7" y="222.7" width="2.6" height="2.6" fill="#ff8a0c"/><rect x="569.7" y="169.7" width="2.6" height="2.6" fill="#ff8a0c"/><rect x="608.2" y="169.7" width="2.6" height="2.6" fill="#ff8a0c"/><rect x="569.7" y="218.7" width="2.6" height="2.6" fill="#ff8a0c"/><rect x="608.2" y="218.7" width="2.6" height="2.6" fill="#ff8a0c"/><rect x="569.7" y="278.7" width="2.6" height="2.6" fill="#ff8a0c"/><rect x="608.2" y="278.7" width="2.6" height="2.6" fill="#ff8a0c"/><rect x="588.7" y="278.7" width="2.6" height="2.6" fill="#ff8a0c"/><rect x="589.7" y="281.2" width="2.6" height="2.6" fill="#ff8a0c"/><rect x="579.7" y="317.7" width="2.6" height="2.6" fill="#ff8a0c"/><rect x="597.7" y="317.7" width="2.6" height="2.6" fill="#ff8a0c"/><rect x="588.9" y="324.7" width="2.6" height="2.6" fill="#ff8a0c"/><rect x="588.9" y="307.2" width="2.6" height="2.6" fill="#ff8a0c"/><rect x="569.5" y="160.1" width="3.4" height="3.4" fill="#ff8a0c"/><rect x="607.5" y="160.1" width="3.4" height="3.4" fill="#ff8a0c"/><rect x="588.5" y="160.1" width="3.4" height="3.4" fill="#ff8a0c"/><rect x="568.4" y="188.4" width="4.4" height="4.4" fill="#ff8a0c"/><rect x="572.4" y="188.4" width="4.4" height="4.4" fill="#ff8a0c"/><rect x="583.0" y="188.4" width="4.4" height="4.4" fill="#ff8a0c"/><rect x="588.0" y="188.4" width="4.4" height="4.4" fill="#ff8a0c"/><rect x="592.4" y="188.4" width="4.4" height="4.4" fill="#ff8a0c"/><rect x="603.2" y="188.4" width="4.4" height="4.4" fill="#ff8a0c"/><rect x="607.4" y="188.4" width="4.4" height="4.4" fill="#ff8a0c"/><rect x="568.4" y="248.0" width="4.4" height="4.4" fill="#ff8a0c"/><rect x="572.4" y="248.0" width="4.4" height="4.4" fill="#ff8a0c"/><rect x="583.0" y="248.0" width="4.4" height="4.4" fill="#ff8a0c"/><rect x="588.0" y="248.0" width="4.4" height="4.4" fill="#ff8a0c"/><rect x="592.4" y="248.0" width="4.4" height="4.4" fill="#ff8a0c"/><rect x="603.2" y="248.0" width="4.4" height="4.4" fill="#ff8a0c"/><rect x="607.4" y="248.0" width="4.4" height="4.4" fill="#ff8a0c"/><rect x="568.7" y="303.7" width="4.6" height="4.6" fill="#ff8a0c"/><rect x="606.9" y="303.7" width="4.6" height="4.6" fill="#ff8a0c"/><rect x="568.7" y="307.7" width="4.6" height="4.6" fill="#ff8a0c"/><rect x="606.9" y="307.7" width="4.6" height="4.6" fill="#ff8a0c"/><path d="M590.2 309V327" stroke="#c8621a" stroke-width="1.76"/><g transform="translate(0 716.7) scale(1 -1)"><path d="M572.4 132.4H608.2V161.8H609.8V308L590.2 327L570.8 308V161.8H572.4z" fill="rgba(255,136,0,0.40)" stroke="#ffa01c" stroke-width="1.89" stroke-linejoin="round"/><path d="M570.8 308H609.8" stroke="#ffa01c" stroke-width="1.35" fill="none"/><path d="M569.5 190.6H611M569.5 250.3H611" stroke="#d88a1a" stroke-width="2.16" fill="none"/><path d="M570.8 161.8V308M609.8 161.8V308" stroke="#ffa01c" stroke-width="2.43" fill="none"/><rect x="571.1" y="131.5" width="2.6" height="2.6" fill="#ff8a0c"/><rect x="588.9" y="131.5" width="2.6" height="2.6" fill="#ff8a0c"/><rect x="606.9" y="131.5" width="2.6" height="2.6" fill="#ff8a0c"/><rect x="597.7" y="150.2" width="2.6" height="2.6" fill="#ff8a0c"/><rect x="580.7" y="168.2" width="2.6" height="2.6" fill="#ff8a0c"/><rect x="588.9" y="160.5" width="2.6" height="2.6" fill="#ff8a0c"/><rect x="576.7" y="200.2" width="2.6" height="2.6" fill="#ff8a0c"/><rect x="588.9" y="218.7" width="2.6" height="2.6" fill="#ff8a0c"/><rect x="590.7" y="222.7" width="2.6" height="2.6" fill="#ff8a0c"/><rect x="569.7" y="169.7" width="2.6" height="2.6" fill="#ff8a0c"/><rect x="608.2" y="169.7" width="2.6" height="2.6" fill="#ff8a0c"/><rect x="569.7" y="218.7" width="2.6" height="2.6" fill="#ff8a0c"/><rect x="608.2" y="218.7" width="2.6" height="2.6" fill="#ff8a0c"/><rect x="569.7" y="278.7" width="2.6" height="2.6" fill="#ff8a0c"/><rect x="608.2" y="278.7" width="2.6" height="2.6" fill="#ff8a0c"/><rect x="588.7" y="278.7" width="2.6" height="2.6" fill="#ff8a0c"/><rect x="589.7" y="281.2" width="2.6" height="2.6" fill="#ff8a0c"/><rect x="579.7" y="317.7" width="2.6" height="2.6" fill="#ff8a0c"/><rect x="597.7" y="317.7" width="2.6" height="2.6" fill="#ff8a0c"/><rect x="588.9" y="324.7" width="2.6" height="2.6" fill="#ff8a0c"/><rect x="588.9" y="307.2" width="2.6" height="2.6" fill="#ff8a0c"/><rect x="569.5" y="160.1" width="3.4" height="3.4" fill="#ff8a0c"/><rect x="607.5" y="160.1" width="3.4" height="3.4" fill="#ff8a0c"/><rect x="588.5" y="160.1" width="3.4" height="3.4" fill="#ff8a0c"/><rect x="568.4" y="188.4" width="4.4" height="4.4" fill="#ff8a0c"/><rect x="572.4" y="188.4" width="4.4" height="4.4" fill="#ff8a0c"/><rect x="583.0" y="188.4" width="4.4" height="4.4" fill="#ff8a0c"/><rect x="588.0" y="188.4" width="4.4" height="4.4" fill="#ff8a0c"/><rect x="592.4" y="188.4" width="4.4" height="4.4" fill="#ff8a0c"/><rect x="603.2" y="188.4" width="4.4" height="4.4" fill="#ff8a0c"/><rect x="607.4" y="188.4" width="4.4" height="4.4" fill="#ff8a0c"/><rect x="568.4" y="248.0" width="4.4" height="4.4" fill="#ff8a0c"/><rect x="572.4" y="248.0" width="4.4" height="4.4" fill="#ff8a0c"/><rect x="583.0" y="248.0" width="4.4" height="4.4" fill="#ff8a0c"/><rect x="588.0" y="248.0" width="4.4" height="4.4" fill="#ff8a0c"/><rect x="592.4" y="248.0" width="4.4" height="4.4" fill="#ff8a0c"/><rect x="603.2" y="248.0" width="4.4" height="4.4" fill="#ff8a0c"/><rect x="607.4" y="248.0" width="4.4" height="4.4" fill="#ff8a0c"/><rect x="568.7" y="303.7" width="4.6" height="4.6" fill="#ff8a0c"/><rect x="606.9" y="303.7" width="4.6" height="4.6" fill="#ff8a0c"/><rect x="568.7" y="307.7" width="4.6" height="4.6" fill="#ff8a0c"/><rect x="606.9" y="307.7" width="4.6" height="4.6" fill="#ff8a0c"/><path d="M590.2 309V327" stroke="#c8621a" stroke-width="1.76"/></g><path d="M567.6 333.3 L612.8 333.3 L622.2 342.0 L622.2 373.0 L612.0 384.0 L568.4 384.0 L558.2 373.0 L558.2 342.0 z" fill="rgba(0,0,0,0.12)" stroke="#0e0e0e" stroke-width="1.90" stroke-linejoin="round"/><rect x="566.2" y="331.9" width="2.8" height="2.8" fill="#0e0e0e"/><rect x="577.5" y="331.9" width="2.8" height="2.8" fill="#0e0e0e"/><rect x="588.8" y="331.9" width="2.8" height="2.8" fill="#0e0e0e"/><rect x="600.1" y="331.9" width="2.8" height="2.8" fill="#0e0e0e"/><rect x="611.4" y="331.9" width="2.8" height="2.8" fill="#0e0e0e"/><rect x="616.1" y="336.2" width="2.8" height="2.8" fill="#0e0e0e"/><rect x="620.8" y="340.6" width="2.8" height="2.8" fill="#0e0e0e"/><rect x="620.8" y="348.4" width="2.8" height="2.8" fill="#0e0e0e"/><rect x="620.8" y="356.1" width="2.8" height="2.8" fill="#0e0e0e"/><rect x="620.8" y="363.9" width="2.8" height="2.8" fill="#0e0e0e"/><rect x="620.8" y="371.6" width="2.8" height="2.8" fill="#0e0e0e"/><rect x="615.7" y="377.1" width="2.8" height="2.8" fill="#0e0e0e"/><rect x="610.6" y="382.6" width="2.8" height="2.8" fill="#0e0e0e"/><rect x="599.7" y="382.6" width="2.8" height="2.8" fill="#0e0e0e"/><rect x="588.8" y="382.6" width="2.8" height="2.8" fill="#0e0e0e"/><rect x="577.9" y="382.6" width="2.8" height="2.8" fill="#0e0e0e"/><rect x="567.0" y="382.6" width="2.8" height="2.8" fill="#0e0e0e"/><rect x="561.9" y="377.1" width="2.8" height="2.8" fill="#0e0e0e"/><rect x="556.8" y="371.6" width="2.8" height="2.8" fill="#0e0e0e"/><rect x="556.8" y="363.9" width="2.8" height="2.8" fill="#0e0e0e"/><rect x="556.8" y="356.1" width="2.8" height="2.8" fill="#0e0e0e"/><rect x="556.8" y="348.4" width="2.8" height="2.8" fill="#0e0e0e"/><rect x="556.8" y="340.6" width="2.8" height="2.8" fill="#0e0e0e"/><rect x="561.5" y="336.2" width="2.8" height="2.8" fill="#0e0e0e"/><path d="M568.7 336.4 H611.7 M568.7 339.0 H611.7" fill="none" stroke="#0e0e0e" stroke-width="1.71"/><path d="M568.7 336.4 V347.0 M611.7 336.4 V347.0 M570.2 346.7 H610.2" fill="none" stroke="#0e0e0e" stroke-width="1.52"/><rect x="569.9" y="341.2" width="4.6" height="4.6" fill="#0e0e0e"/><rect x="575.4" y="341.2" width="4.6" height="4.6" fill="#0e0e0e"/><rect x="580.9" y="341.2" width="4.6" height="4.6" fill="#0e0e0e"/><rect x="594.9" y="341.2" width="4.6" height="4.6" fill="#0e0e0e"/><rect x="600.4" y="341.2" width="4.6" height="4.6" fill="#0e0e0e"/><rect x="605.9" y="341.2" width="4.6" height="4.6" fill="#0e0e0e"/><rect x="570.1" y="348.4" width="5.2" height="5.2" fill="#0e0e0e"/><rect x="576.6" y="348.4" width="5.2" height="5.2" fill="#0e0e0e"/><rect x="598.6" y="348.4" width="5.2" height="5.2" fill="#0e0e0e"/><rect x="605.1" y="348.4" width="5.2" height="5.2" fill="#0e0e0e"/><rect x="570.1" y="375.4" width="4.2" height="4.2" fill="#0e0e0e"/><rect x="576.1" y="375.4" width="4.2" height="4.2" fill="#0e0e0e"/><rect x="584.1" y="375.4" width="4.2" height="4.2" fill="#0e0e0e"/><rect x="592.1" y="375.4" width="4.2" height="4.2" fill="#0e0e0e"/><rect x="600.1" y="375.4" width="4.2" height="4.2" fill="#0e0e0e"/><rect x="606.1" y="375.4" width="4.2" height="4.2" fill="#0e0e0e"/><path d="M568.7 373.2 H611.7 M568.7 381.8 H611.7 M568.7 375.2 H611.7" fill="none" stroke="#0e0e0e" stroke-width="2.09"/><path d="M568.7 373.2 V383.0 M611.7 373.2 V383.0" fill="none" stroke="#0e0e0e" stroke-width="1.90"/><rect x="552.0" y="351.5" width="6.4" height="14.5" rx="1.5" fill="#0e0e0e"/><circle cx="564.7" cy="371.0" r="3.2" fill="#0e0e0e"/><circle cx="563.7" cy="339.5" r="2.4" fill="#0e0e0e"/><circle cx="567.6" cy="333.3" r="2.2" fill="#0e0e0e"/><rect x="622.0" y="351.5" width="6.4" height="14.5" rx="1.5" fill="#0e0e0e"/><circle cx="615.7" cy="371.0" r="3.2" fill="#0e0e0e"/><circle cx="616.7" cy="339.5" r="2.4" fill="#0e0e0e"/><circle cx="612.8" cy="333.3" r="2.2" fill="#0e0e0e"/><circle cx="590.2" cy="359.0" r="10.2" fill="#131313"/><path d="M540 358.7H575.5M605 358.7H640.5M590.2 329V351.5M590.2 374V391" stroke="#b8591a" stroke-width="1.6" fill="none"/></g><circle cx="920" cy="488.4" r="4.3" fill="none" stroke="#e0e0e0" stroke-width="0.8"/><circle cx="920" cy="488.4" r="4.3" fill="none" stroke="#d01818" stroke-width="0.8" stroke-dasharray="1.5 1.5"/><circle cx="920" cy="488.4" r="1.3" fill="#f58a1a"/><circle cx="920" cy="488.4" r="6.5" fill="none" stroke="#e4e4e4" stroke-width="0.8"/><path d="M920 460.5V481.8" stroke="#14d21e" stroke-width="0.9"/><path d="M920 453.8L922.6 461H917.4z" fill="#12dc22"/><path d="M926.6 488.4H948.5" stroke="#d4151c" stroke-width="0.9"/><path d="M954.6 488.4L947.5 486V490.8z" fill="#dc141c"/></svg>
<div class="t w" style="left:138px;top:49px;">Top Ortho</div>
<div class="t w" style="left:138px;top:64px;">Meters</div>
<div class="t w" style="left:174.5px;top:661px;">(1) Satellite</div>
<div style="left:406px;top:470.6px;font:18px/22px 'Liberation Sans',sans-serif;color:#dce610;-webkit-text-stroke:0.2px #dce610;white-space:nowrap;transform-origin:0 0;transform:scaleX(0.915)">Box mode</div>
<div style="left:884.5px;top:638.6px;font:18px/22px 'Liberation Sans',sans-serif;color:#dce610;-webkit-text-stroke:0.2px #dce610;white-space:nowrap;transform-origin:0 0;transform:scaleX(0.916)">Inset image</div>
<div class="" style="left:1057px;top:42px;width:132px;height:634px;background:#727272"></div>
<div class="" style="left:1188.6px;top:42px;width:1.6px;height:722px;background:#2c2c2c"></div>
<svg style="left:1065.7px;top:46.7px" width="7" height="7" viewBox="0 0 7 7"><path d="M0.3 0.8H6.7L3.5 6.4z" fill="#1a1a1a"/></svg>
<div class="ph" style="left:1075.2px;top:45px;">Transform</div>
<svg style="left:1161px;top:49.2px" width="9" height="5" viewBox="0 0 9 5"><g fill="#a2a2a2"><rect x="0.3" y="0.3" width="1" height="1"/><rect x="0.3" y="2.3" width="1" height="1"/><rect x="2.3" y="0.3" width="1" height="1"/><rect x="2.3" y="2.3" width="1" height="1"/><rect x="4.3" y="0.3" width="1" height="1"/><rect x="4.3" y="2.3" width="1" height="1"/><rect x="6.3" y="0.3" width="1" height="1"/><rect x="6.3" y="2.3" width="1" height="1"/></g></svg>
<div class="t" style="left:1068.7px;top:68px;">Median:</div>
<div class="n" style="left:1063px;top:80.1px;width:108.5px;height:15px;line-height:15.7px;border-radius:6px 6px 0 0;padding-left:11px;">X:<svg style="left:4px;top:50%;margin-top:-2.5px" width="3" height="5" viewBox="0 0 3 5"><path d="M3 0L0 2.5L3 5z" fill="#7d7d7d"/></svg><svg style="right:4px;top:50%;margin-top:-2.5px" width="3" height="5" viewBox="0 0 3 5"><path d="M0 0L3 2.5L0 5z" fill="#7d7d7d"/></svg><span style="position:absolute;right:11px;top:0;font-size:7.9px">1.93236µm</span></div>
<div class="n" style="left:1063px;top:94.1px;width:108.5px;height:15.2px;line-height:15.9px;border-radius:0;padding-left:11px;">Y:<svg style="left:4px;top:50%;margin-top:-2.5px" width="3" height="5" viewBox="0 0 3 5"><path d="M3 0L0 2.5L3 5z" fill="#7d7d7d"/></svg><svg style="right:4px;top:50%;margin-top:-2.5px" width="3" height="5" viewBox="0 0 3 5"><path d="M0 0L3 2.5L0 5z" fill="#7d7d7d"/></svg><span style="position:absolute;right:11px;top:0;font-size:7.9px">2.45588m</span></div>
<div class="n" style="left:1063px;top:108.3px;width:108.5px;height:15.2px;line-height:15.9px;border-radius:0 0 6px 6px;padding-left:11px;">Z:<svg style="left:4px;top:50%;margin-top:-2.5px" width="3" height="5" viewBox="0 0 3 5"><path d="M3 0L0 2.5L3 5z" fill="#7d7d7d"/></svg><svg style="right:4px;top:50%;margin-top:-2.5px" width="3" height="5" viewBox="0 0 3 5"><path d="M0 0L3 2.5L0 5z" fill="#7d7d7d"/></svg><span style="position:absolute;right:11px;top:0;font-size:7.9px">1.15711cm</span></div>
<div class="tg" style="left:1063px;top:125.4px;width:54px;height:14.6px;line-height:15.3px;border-radius:3px 0 0 3px;text-align:center;padding:0">Global</div>
<div class="ts" style="left:1116px;top:125.4px;width:55.5px;height:14.6px;line-height:15.3px;border-radius:0 3px 3px 0;text-align:center;padding:0">Local</div>
<div class="t" style="left:1068.7px;top:144px;">Vertices Data:</div>
<div class="n" style="left:1063px;top:157.8px;width:108.5px;height:14.6px;line-height:15.3px;border-radius:7.3px;padding-left:11px;">Mean Bevel Weig:<svg style="left:4px;top:50%;margin-top:-2.5px" width="3" height="5" viewBox="0 0 3 5"><path d="M3 0L0 2.5L3 5z" fill="#7d7d7d"/></svg><svg style="right:4px;top:50%;margin-top:-2.5px" width="3" height="5" viewBox="0 0 3 5"><path d="M0 0L3 2.5L0 5z" fill="#7d7d7d"/></svg><span style="position:absolute;right:11px;top:0;font-size:7.9px">0.00</span></div>
<div class="t" style="left:1068.7px;top:177px;">Edges Data:</div>
<div class="n" style="left:1063px;top:190.2px;width:108.5px;height:14.6px;line-height:15.3px;border-radius:7.3px;padding-left:11px;">Mean Bevel Weig:<svg style="left:4px;top:50%;margin-top:-2.5px" width="3" height="5" viewBox="0 0 3 5"><path d="M3 0L0 2.5L3 5z" fill="#7d7d7d"/></svg><svg style="right:4px;top:50%;margin-top:-2.5px" width="3" height="5" viewBox="0 0 3 5"><path d="M0 0L3 2.5L0 5z" fill="#7d7d7d"/></svg><span style="position:absolute;right:11px;top:0;font-size:7.9px">0.00</span></div>
<div class="n" style="left:1063px;top:206.3px;width:108.5px;height:14.6px;line-height:15.3px;border-radius:7.3px;padding-left:11px;">Mean Crease:<svg style="left:4px;top:50%;margin-top:-2.5px" width="3" height="5" viewBox="0 0 3 5"><path d="M3 0L0 2.5L3 5z" fill="#7d7d7d"/></svg><svg style="right:4px;top:50%;margin-top:-2.5px" width="3" height="5" viewBox="0 0 3 5"><path d="M0 0L3 2.5L0 5z" fill="#7d7d7d"/></svg><span style="position:absolute;right:11px;top:0;font-size:7.9px">0.00</span></div>
<div class="sep" style="left:1060.5px;top:226px;width:112.5px"></div>
<svg style="left:1066.5px;top:231.5px" width="7" height="7" viewBox="0 0 7 7"><path d="M0.3 0.8H6.7L3.5 6.4z" fill="#1a1a1a"/></svg>
<div class="cb" style="left:1075.3px;top:229.8px;width:11.2px;height:11.2px;"><svg style="left:1px;top:0.5px" width="9" height="9" viewBox="0 0 9 9"><path d="M1.3 4.6L3.5 7L7.8 1.2" stroke="#f2f2f2" stroke-width="1.7" fill="none"/></svg></div>
<div class="ph" style="left:1090px;top:230px;">Grease Pencil</div>
<svg style="left:1161px;top:233.7px" width="9" height="5" viewBox="0 0 9 5"><g fill="#a2a2a2"><rect x="0.3" y="0.3" width="1" height="1"/><rect x="0.3" y="2.3" width="1" height="1"/><rect x="2.3" y="0.3" width="1" height="1"/><rect x="2.3" y="2.3" width="1" height="1"/><rect x="4.3" y="0.3" width="1" height="1"/><rect x="4.3" y="2.3" width="1" height="1"/><rect x="6.3" y="0.3" width="1" height="1"/><rect x="6.3" y="2.3" width="1" height="1"/></g></svg>
<div class="rs" style="left:1063px;top:250.3px;width:54px;height:14.6px;line-height:15.3px;border-radius:3px 0 0 3px;text-align:center;padding:0">Scene</div>
<div class="rd" style="left:1116px;top:250.3px;width:55.5px;height:14.6px;line-height:15.3px;border-radius:0 3px 3px 0;text-align:center;padding:0">Object</div>
<div class="hb" style="left:1063px;top:268.4px;width:23.5px;height:14px;line-height:14.7px;border-radius:3px 0 0 3px;padding:0"><svg style="left:2.5px;top:1.5px" width="10" height="10" viewBox="0 0 10 10"><path d="M0.8 9.2L1.6 6.6L7.2 1L9 2.8L3.4 8.4z" fill="#94bc3a" stroke="#2e3a10" stroke-width="0.5"/><path d="M6.4 1.8L8.2 3.6L9 2.8L7.2 1z" fill="#e04848"/><path d="M0.8 9.2L1.6 6.6L3.4 8.4z" fill="#e9c9a0"/></svg><svg style="right:1.2px;top:50%;margin-top:-4.9px" width="4.4" height="9.8" viewBox="0 0 4.4 9.8"><path d="M2.2 0.2L4.3 4H0.1zM2.2 9.6L4.3 5.8H0.1z" fill="#ccc"/></svg></div>
<div class="b" style="left:1085.5px;top:268.4px;width:86px;height:14px;line-height:14.7px;border-radius:0 3px 3px 0;text-align:center;padding:0 0 0 11px">New<svg style="left:3px;top:1.4px" width="9.6" height="9.6" viewBox="0 0 8 8"><path d="M3.1 0.5H4.9V3.1H7.5V4.9H4.9V7.5H3.1V4.9H0.5V3.1H3.1z" fill="#f4f4f4" stroke="#2e2e2e" stroke-width="0.6"/></svg></div>
<div class="sep" style="left:1060.5px;top:288.3px;width:112.5px"></div>
<svg style="left:1065.7px;top:294.2px" width="7" height="7" viewBox="0 0 7 7"><path d="M0.3 0.8H6.7L3.5 6.4z" fill="#1a1a1a"/></svg>
<div class="ph" style="left:1075.2px;top:292px;">View</div>
<svg style="left:1161px;top:296.7px" width="9" height="5" viewBox="0 0 9 5"><g fill="#a2a2a2"><rect x="0.3" y="0.3" width="1" height="1"/><rect x="0.3" y="2.3" width="1" height="1"/><rect x="2.3" y="0.3" width="1" height="1"/><rect x="2.3" y="2.3" width="1" height="1"/><rect x="4.3" y="0.3" width="1" height="1"/><rect x="4.3" y="2.3" width="1" height="1"/><rect x="6.3" y="0.3" width="1" height="1"/><rect x="6.3" y="2.3" width="1" height="1"/></g></svg>
<div class="n" style="left:1063px;top:312.4px;width:108.5px;height:14.6px;line-height:15.3px;border-radius:7.3px;padding-left:11px;">Lens:<svg style="left:4px;top:50%;margin-top:-2.5px" width="3" height="5" viewBox="0 0 3 5"><path d="M3 0L0 2.5L3 5z" fill="#7d7d7d"/></svg><svg style="right:4px;top:50%;margin-top:-2.5px" width="3" height="5" viewBox="0 0 3 5"><path d="M0 0L3 2.5L0 5z" fill="#7d7d7d"/></svg><span style="position:absolute;right:11px;top:0;font-size:7.9px">35mm</span></div>
<div class="t" style="left:1068.7px;top:331px;">Lock to Object:</div>
<div class="f" style="left:1063px;top:344.8px;width:108.5px;height:14.6px;line-height:15.3px;border-radius:3px;padding:0"><svg style="left:3.5px;top:1.6px" width="10" height="10" viewBox="0 0 10 10"><path d="M5 0.4L9.3 2.3V7.4L5 9.6L0.7 7.4V2.3z" fill="#e8903a" stroke="#7a4a1a" stroke-width="0.5"/><path d="M5 0.4L9.3 2.3L5 4.4L0.7 2.3z" fill="#fbd9a8"/><path d="M5 4.4V9.6L0.7 7.4V2.3z" fill="#f4b060"/><path d="M0.7 2.3L5 4.4L9.3 2.3M5 4.4V9.6" stroke="#fff" stroke-width="0.5" fill="none" opacity=".8"/></svg><svg style="right:2.5px;top:1.5px" width="10" height="10" viewBox="0 0 10 10"><path d="M1 9L1.4 7.4L5.6 3.2L6.8 4.4L2.6 8.6z" fill="#ddd" stroke="#222" stroke-width="0.6"/><path d="M5.2 2.2L7.8 4.8L8.4 4.2L7.9 3.7L9.2 2.4C9.8 1.8 8.2 0.2 7.6 0.8L6.3 2.1L5.8 1.6z" fill="#1a1a1a"/></svg></div>
<div class="cb" style="left:1065.2px;top:363.5px;width:10.2px;height:10.2px;"></div>
<div class="t" style="left:1081.8px;top:363px;">Lock to Cursor</div>
<div class="cb" style="left:1065.2px;top:381.5px;width:10.2px;height:10.2px;"></div>
<div class="t" style="left:1081.8px;top:381px;">Lock Camera to View</div>
<div class="t" style="left:1068.7px;top:400px;">Clip:</div>
<div class="n" style="left:1063px;top:412.5px;width:108.5px;height:14.8px;line-height:15.5px;border-radius:6px 6px 0 0;padding-left:11px;">Start:<svg style="left:4px;top:50%;margin-top:-2.5px" width="3" height="5" viewBox="0 0 3 5"><path d="M3 0L0 2.5L3 5z" fill="#7d7d7d"/></svg><svg style="right:4px;top:50%;margin-top:-2.5px" width="3" height="5" viewBox="0 0 3 5"><path d="M0 0L3 2.5L0 5z" fill="#7d7d7d"/></svg><span style="position:absolute;right:11px;top:0;font-size:7.9px">10cm</span></div>
<div class="n" style="left:1063px;top:426.3px;width:108.5px;height:14.8px;line-height:15.5px;border-radius:0 0 6px 6px;padding-left:11px;">End:<svg style="left:4px;top:50%;margin-top:-2.5px" width="3" height="5" viewBox="0 0 3 5"><path d="M3 0L0 2.5L3 5z" fill="#7d7d7d"/></svg><svg style="right:4px;top:50%;margin-top:-2.5px" width="3" height="5" viewBox="0 0 3 5"><path d="M0 0L3 2.5L0 5z" fill="#7d7d7d"/></svg><span style="position:absolute;right:11px;top:0;font-size:7.9px">1km</span></div>
<div class="t" style="left:1068.7px;top:444px;color:#3f3f3f;opacity:.75">Local Camera:</div>
<div class="f" style="left:1063px;top:456.3px;width:108.5px;height:14.6px;line-height:15.3px;border-radius:3px;padding:0;opacity:.55"><svg style="left:3.5px;top:1.6px" width="10" height="10" viewBox="0 0 10 10"><path d="M5 0.4L9.3 2.3V7.4L5 9.6L0.7 7.4V2.3z" fill="#e8903a" stroke="#7a4a1a" stroke-width="0.5"/><path d="M5 0.4L9.3 2.3L5 4.4L0.7 2.3z" fill="#fbd9a8"/><path d="M5 4.4V9.6L0.7 7.4V2.3z" fill="#f4b060"/><path d="M0.7 2.3L5 4.4L9.3 2.3M5 4.4V9.6" stroke="#fff" stroke-width="0.5" fill="none" opacity=".8"/></svg><svg style="right:2.5px;top:1.5px" width="10" height="10" viewBox="0 0 10 10"><path d="M1 9L1.4 7.4L5.6 3.2L6.8 4.4L2.6 8.6z" fill="#ddd" stroke="#222" stroke-width="0.6"/><path d="M5.2 2.2L7.8 4.8L8.4 4.2L7.9 3.7L9.2 2.4C9.8 1.8 8.2 0.2 7.6 0.8L6.3 2.1L5.8 1.6z" fill="#1a1a1a"/></svg></div>
<div class="cb" style="left:1065.2px;top:476.8px;width:10.2px;height:10.2px;"></div>
<div class="t" style="left:1081.8px;top:477px;">Render Border</div>
<div class="sep" style="left:1060.5px;top:494.2px;width:112.5px"></div>
<svg style="left:1065.7px;top:500.4px" width="7" height="7" viewBox="0 0 7 7"><path d="M0.3 0.8H6.7L3.5 6.4z" fill="#1a1a1a"/></svg>
<div class="ph" style="left:1075.2px;top:498px;">3D Cursor</div>
<svg style="left:1161px;top:502.9px" width="9" height="5" viewBox="0 0 9 5"><g fill="#a2a2a2"><rect x="0.3" y="0.3" width="1" height="1"/><rect x="0.3" y="2.3" width="1" height="1"/><rect x="2.3" y="0.3" width="1" height="1"/><rect x="2.3" y="2.3" width="1" height="1"/><rect x="4.3" y="0.3" width="1" height="1"/><rect x="4.3" y="2.3" width="1" height="1"/><rect x="6.3" y="0.3" width="1" height="1"/><rect x="6.3" y="2.3" width="1" height="1"/></g></svg>
<div class="t" style="left:1068.7px;top:521px;">Location:</div>
<div class="n" style="left:1063px;top:533.3px;width:108.5px;height:15px;line-height:15.7px;border-radius:6px 6px 0 0;padding-left:11px;">X:<svg style="left:4px;top:50%;margin-top:-2.5px" width="3" height="5" viewBox="0 0 3 5"><path d="M3 0L0 2.5L3 5z" fill="#7d7d7d"/></svg><svg style="right:4px;top:50%;margin-top:-2.5px" width="3" height="5" viewBox="0 0 3 5"><path d="M0 0L3 2.5L0 5z" fill="#7d7d7d"/></svg><span style="position:absolute;right:11px;top:0;font-size:7.9px">0m</span></div>
<div class="n" style="left:1063px;top:547.3px;width:108.5px;height:15.4px;line-height:16.1px;border-radius:0;padding-left:11px;">Y:<svg style="left:4px;top:50%;margin-top:-2.5px" width="3" height="5" viewBox="0 0 3 5"><path d="M3 0L0 2.5L3 5z" fill="#7d7d7d"/></svg><svg style="right:4px;top:50%;margin-top:-2.5px" width="3" height="5" viewBox="0 0 3 5"><path d="M0 0L3 2.5L0 5z" fill="#7d7d7d"/></svg><span style="position:absolute;right:11px;top:0;font-size:7.9px">0m</span></div>
<div class="n" style="left:1063px;top:561.7px;width:108.5px;height:15px;line-height:15.7px;border-radius:0 0 6px 6px;padding-left:11px;">Z:<svg style="left:4px;top:50%;margin-top:-2.5px" width="3" height="5" viewBox="0 0 3 5"><path d="M3 0L0 2.5L3 5z" fill="#7d7d7d"/></svg><svg style="right:4px;top:50%;margin-top:-2.5px" width="3" height="5" viewBox="0 0 3 5"><path d="M0 0L3 2.5L0 5z" fill="#7d7d7d"/></svg><span style="position:absolute;right:11px;top:0;font-size:7.9px">0m</span></div>
<div class="sep" style="left:1060.5px;top:582.5px;width:112.5px"></div>
<svg style="left:1065.7px;top:588.1px" width="7" height="7" viewBox="0 0 7 7"><path d="M0.3 0.8H6.7L3.5 6.4z" fill="#1a1a1a"/></svg>
<div class="ph" style="left:1075.2px;top:586px;">Item</div>
<svg style="left:1161px;top:590.6px" width="9" height="5" viewBox="0 0 9 5"><g fill="#a2a2a2"><rect x="0.3" y="0.3" width="1" height="1"/><rect x="0.3" y="2.3" width="1" height="1"/><rect x="2.3" y="0.3" width="1" height="1"/><rect x="2.3" y="2.3" width="1" height="1"/><rect x="4.3" y="0.3" width="1" height="1"/><rect x="4.3" y="2.3" width="1" height="1"/><rect x="6.3" y="0.3" width="1" height="1"/><rect x="6.3" y="2.3" width="1" height="1"/></g></svg>
<svg style="left:1066.6px;top:608.5px" width="10" height="10" viewBox="0 0 10 10"><path d="M5 0.4L9.3 2.3V7.4L5 9.6L0.7 7.4V2.3z" fill="#e8903a" stroke="#7a4a1a" stroke-width="0.5"/><path d="M5 0.4L9.3 2.3L5 4.4L0.7 2.3z" fill="#fbd9a8"/><path d="M5 4.4V9.6L0.7 7.4V2.3z" fill="#f4b060"/><path d="M0.7 2.3L5 4.4L9.3 2.3M5 4.4V9.6" stroke="#fff" stroke-width="0.5" fill="none" opacity=".8"/></svg>
<div class="f" style="left:1083.4px;top:606.4px;width:88.1px;height:14.6px;line-height:15.3px;border-radius:3px;padding-left:6px">Satellite</div>
<div class="sep" style="left:1060.5px;top:626.7px;width:112.5px"></div>
<svg style="left:1065.7px;top:632.1px" width="7" height="7" viewBox="0 0 7 7"><path d="M0.8 0.3V6.7L6.4 3.5z" fill="#1a1a1a"/></svg>
<div class="ph" style="left:1075.2px;top:630px;">Display</div>
<svg style="left:1161px;top:634.6px" width="9" height="5" viewBox="0 0 9 5"><g fill="#a2a2a2"><rect x="0.3" y="0.3" width="1" height="1"/><rect x="0.3" y="2.3" width="1" height="1"/><rect x="2.3" y="0.3" width="1" height="1"/><rect x="2.3" y="2.3" width="1" height="1"/><rect x="4.3" y="0.3" width="1" height="1"/><rect x="4.3" y="2.3" width="1" height="1"/><rect x="6.3" y="0.3" width="1" height="1"/><rect x="6.3" y="2.3" width="1" height="1"/></g></svg>
<div class="sep" style="left:1060.5px;top:644.3px;width:112.5px"></div>
<svg style="left:1065.7px;top:649.9px" width="7" height="7" viewBox="0 0 7 7"><path d="M0.3 0.8H6.7L3.5 6.4z" fill="#1a1a1a"/></svg>
<div class="ph" style="left:1075.2px;top:648px;">Shading</div>
<svg style="left:1161px;top:652.4px" width="9" height="5" viewBox="0 0 9 5"><g fill="#a2a2a2"><rect x="0.3" y="0.3" width="1" height="1"/><rect x="0.3" y="2.3" width="1" height="1"/><rect x="2.3" y="0.3" width="1" height="1"/><rect x="2.3" y="2.3" width="1" height="1"/><rect x="4.3" y="0.3" width="1" height="1"/><rect x="4.3" y="2.3" width="1" height="1"/><rect x="6.3" y="0.3" width="1" height="1"/><rect x="6.3" y="2.3" width="1" height="1"/></g></svg>
<div class="" style="left:1063px;top:668.4px;width:108.5px;height:7.6px;overflow:hidden"><div class="m" style="left:0;top:0;width:108.5px;height:14.6px;line-height:12.6px;border-radius:3px">Multitexture<svg style="right:1.9px;top:50%;margin-top:-4.9px" width="4.4" height="9.8" viewBox="0 0 4.4 9.8"><path d="M2.2 0.2L4.3 4H0.1zM2.2 9.6L4.3 5.8H0.1z" fill="#ddd"/></svg></div></div>
<div class="" style="left:1177.3px;top:45px;width:9.3px;height:628px;background:linear-gradient(90deg,#575757,#636363);border-radius:5px;border:1px solid #4c4c4c"></div>
<div class="" style="left:1177.3px;top:45px;width:9.3px;height:390px;background:linear-gradient(90deg,#9a9a9a,#858585 60%,#7a7a7a);border-radius:5px;border:1px solid #565656"></div>
<svg style="left:1179px;top:42px" width="10" height="10" viewBox="0 0 10 10"><path d="M2 0L10 8M5 0L10 5M8 0L10 2" stroke="#a4a4a4" stroke-width="0.8" fill="none"/><path d="M3.5 0L10 6.5M6.5 0L10 3.5" stroke="#333" stroke-width="0.8" fill="none"/></svg>
<div class="" style="left:5px;top:676px;width:1184px;height:19.5px;background:#727272"></div>
<div class="" style="left:5px;top:695px;width:1184px;height:1.2px;background:#1c1c1c"></div>
<svg style="left:5px;top:685.5px" width="10" height="10" viewBox="0 0 10 10"><path d="M0 2L8 10M0 5L5 10M0 8L2 10" stroke="#a4a4a4" stroke-width="0.8" fill="none"/><path d="M0 3.5L6.5 10M0 6.5L3.5 10" stroke="#333" stroke-width="0.8" fill="none"/></svg>
<div class="hb" style="left:12.8px;top:678.3px;width:21.7px;height:14.4px;line-height:15.1px;border-radius:3px;padding:0"><svg style="left:2.6px;top:1.2px" width="11.5" height="11" viewBox="0 0 11.5 11"><path d="M0.8 1.8Q5.7 0 10.7 1.8V7Q9 9.4 5.7 10.4Q2.4 9.4 0.8 7z" fill="#f4f4f4" stroke="#2e2e2e" stroke-width="0.6"/><path d="M5.7 3.2L10.7 1.8V7Q9 9.4 5.7 10.4z" fill="#b4b4b4"/><path d="M0.8 1.8Q5.7 0 10.7 1.8L5.7 3.2z" fill="#dcdcdc"/><path d="M0.8 1.8L5.7 3.2L10.7 1.8M5.7 3.2V10.4" stroke="#8a8a8a" stroke-width="0.4" fill="none"/></svg><svg style="right:1.2px;top:50%;margin-top:-4.9px" width="4.4" height="9.8" viewBox="0 0 4.4 9.8"><path d="M2.2 0.2L4.3 4H0.1zM2.2 9.6L4.3 5.8H0.1z" fill="#ccc"/></svg></div>
<div class="t" style="left:53.2px;top:681px;transform:translateX(-50%)">View</div>
<div class="t" style="left:88px;top:681px;transform:translateX(-50%)">Select</div>
<div class="t" style="left:121.6px;top:681px;transform:translateX(-50%)">Add</div>
<div class="t" style="left:153px;top:681px;transform:translateX(-50%)">Mesh</div>
<div class="m" style="left:172.2px;top:678.3px;width:72.6px;height:14.4px;line-height:15.1px;border-radius:1.5px;background:#aaaa24;border-color:#9c9c26;color:#e0e078;padding-left:17px">Edit Mode<svg style="left:3.5px;top:1.5px" width="10" height="10" viewBox="0 0 10 10"><path d="M2 1.5H8Q8.8 1.5 8.8 2.3V7.7Q8.8 8.5 8 8.5H2Q1.2 8.5 1.2 7.7V2.3Q1.2 1.5 2 1.5z" fill="none" stroke="#e8d860" stroke-width="1"/><rect x="0.3" y="0.6" width="2" height="2" fill="#f2e070"/><rect x="0.3" y="7.4" width="2" height="2" fill="#f2e070"/><rect x="7.7" y="7.4" width="2" height="2" fill="#f2e070"/><rect x="4" y="3.8" width="2" height="2" fill="#f2e070"/><rect x="7.7" y="0.6" width="2" height="2" fill="#f2e070"/></svg><svg style="right:1.4px;top:50%;margin-top:-4.9px" width="4.4" height="9.8" viewBox="0 0 4.4 9.8"><path d="M2.2 0.2L4.3 4H0.1zM2.2 9.6L4.3 5.8H0.1z" fill="#e0e078"/></svg></div>
<div class="hb" style="left:249.2px;top:678.3px;width:25.3px;height:14.4px;line-height:15.1px;border-radius:3px;padding:0"><svg style="left:2.8px;top:1.6px" width="10" height="10" viewBox="0 0 10 10"><circle cx="5" cy="5" r="4.3" fill="#e4e4e4" stroke="#222" stroke-width="0.7"/><path d="M0.8 5H9.2M5 0.8V9.2M5 0.8Q2 5 5 9.2M5 0.8Q8 5 5 9.2" stroke="#222" stroke-width="0.6" fill="none"/></svg><svg style="right:1.4px;top:50%;margin-top:-4.9px" width="4.4" height="9.8" viewBox="0 0 4.4 9.8"><path d="M2.2 0.2L4.3 4H0.1zM2.2 9.6L4.3 5.8H0.1z" fill="#ccc"/></svg></div>
<div class="hb" style="left:278.5px;top:678.3px;width:25.3px;height:14.4px;line-height:15.1px;border-radius:3px;padding:0"><svg style="left:1.8px;top:1.3px" width="11" height="11" viewBox="0 0 11 11"><circle cx="3.8" cy="3.8" r="3.2" fill="#ececec" stroke="#888" stroke-width="0.4"/><circle cx="7" cy="7" r="3.4" fill="#f6f6f6" stroke="#999" stroke-width="0.4"/><circle cx="5" cy="5" r="1.5" fill="#2a6be0" stroke="#fff" stroke-width="0.5"/></svg><svg style="right:1.4px;top:50%;margin-top:-4.9px" width="4.4" height="9.8" viewBox="0 0 4.4 9.8"><path d="M2.2 0.2L4.3 4H0.1zM2.2 9.6L4.3 5.8H0.1z" fill="#ccc"/></svg></div>
<div class="hb" style="left:308.2px;top:678.3px;width:15.4px;height:14.4px;line-height:15.1px;border-radius:3px 0 0 3px;padding:0"><svg style="left:1.5px;top:1px" width="11" height="11" viewBox="0 0 11 11"><path d="M5.5 6V0.6" stroke="#2a4fd0" stroke-width="1.4"/><path d="M5.5 6L0.8 9.8" stroke="#d02a2a" stroke-width="1.4"/><path d="M5.5 6L10.2 9.8" stroke="#2ab02a" stroke-width="1.4"/></svg></div>
<div class="b" style="left:322.6px;top:678.3px;width:15.4px;height:14.4px;line-height:15.1px;border-radius:0;padding:0;background:linear-gradient(#6390d4,#5680c2)"><svg style="left:1.7px;top:1.2px" width="10" height="10" viewBox="0 0 10 10"><path d="M0.8 9.2L6.3 3.7" stroke="#2d4f8f" stroke-width="2.2"/><path d="M0.8 9.2L6.3 3.7" stroke="#a9c2ee" stroke-width="1"/><path d="M9.4 0.6L8.4 6L4 1.6z" fill="#a9c2ee" stroke="#2d4f8f" stroke-width="0.6"/></svg></div>
<div class="hb" style="left:337px;top:678.3px;width:15.4px;height:14.4px;line-height:15.1px;border-radius:0;padding:0"><svg style="left:2px;top:1.5px" width="10" height="10" viewBox="0 0 10 10"><path d="M1 9.4Q1 2 9.2 1.2" stroke="#34507e" stroke-width="2.2" fill="none"/><path d="M1 9.4Q1 2 9.2 1.2" stroke="#5b80ba" stroke-width="1" fill="none"/></svg></div>
<div class="hb" style="left:351.4px;top:678.3px;width:16px;height:14.4px;line-height:15.1px;border-radius:0;padding:0"><svg style="left:2px;top:1.5px" width="10" height="10" viewBox="0 0 10 10"><path d="M0.8 9.2L6 4" stroke="#34507e" stroke-width="2.2"/><path d="M0.8 9.2L6 4" stroke="#5b80ba" stroke-width="1"/><rect x="5" y="0.8" width="4.2" height="4.2" fill="#5b80ba" stroke="#34507e" stroke-width="0.6"/></svg></div>
<div class="m" style="left:366.4px;top:678.3px;width:53px;height:14.4px;line-height:15.1px;border-radius:0 3px 3px 0;padding-left:5.5px">Global<svg style="right:1.4px;top:50%;margin-top:-4.9px" width="4.4" height="9.8" viewBox="0 0 4.4 9.8"><path d="M2.2 0.2L4.3 4H0.1zM2.2 9.6L4.3 5.8H0.1z" fill="#ccc"/></svg></div>
<div class="b" style="left:424px;top:678.3px;width:15.4px;height:14.4px;line-height:15.1px;border-radius:3px 0 0 3px;padding:0"><svg style="left:2.2px;top:1.3px" width="10" height="10" viewBox="0 0 10 10"><path d="M1 2.6L5 1L9 2.6V7.4L5 9.4L1 7.4z" fill="#a9a9a9" stroke="#686868" stroke-width="0.5"/><path d="M1 2.6L5 1L9 2.6L5 4.4z" fill="#bcbcbc"/><path d="M5 4.4L9 2.6V7.4L5 9.4z" fill="#9a9a9a"/><rect x="0.2" y="1.6" width="2" height="2" fill="#e89a4a"/></svg></div>
<div class="b" style="left:438.4px;top:678.3px;width:15.4px;height:14.4px;line-height:15.1px;border-radius:0;padding:0"><svg style="left:2.2px;top:1.3px" width="10" height="10" viewBox="0 0 10 10"><path d="M1 2.6L5 1L9 2.6V7.4L5 9.4L1 7.4z" fill="#a9a9a9" stroke="#686868" stroke-width="0.5"/><path d="M1 2.6L5 1L9 2.6L5 4.4z" fill="#bcbcbc"/><path d="M5 4.4L9 2.6V7.4L5 9.4z" fill="#9a9a9a"/><path d="M1.1 2.6V7.4" stroke="#e89a4a" stroke-width="1.3"/></svg></div>
<div class="b" style="left:452.8px;top:678.3px;width:15.2px;height:14.4px;line-height:15.1px;border-radius:0 3px 3px 0;padding:0;background:#b0b026;border-color:#a0a028"><svg style="left:2.2px;top:1.3px" width="10" height="10" viewBox="0 0 10 10"><path d="M1 2.6L5 1L9 2.6V7.4L5 9.4L1 7.4z" fill="#f4d020" stroke="#b89a10" stroke-width="0.5"/><path d="M1 2.6L5 1L9 2.6L5 4.4z" fill="#fbe870"/><path d="M5 4.4L9 2.6V7.4L5 9.4z" fill="#e0b810"/></svg></div>
<div class="hb" style="left:472.3px;top:678.3px;width:25px;height:14.4px;line-height:15.1px;border-radius:3px;padding:0"><svg style="left:4px;top:2px" width="9" height="9" viewBox="0 0 9 9"><circle cx="4.5" cy="4.5" r="3.4" fill="#777" stroke="#999" stroke-width="0.9"/><circle cx="4.5" cy="4.5" r="1.4" fill="#666"/></svg><svg style="right:1.4px;top:50%;margin-top:-4.9px" width="4.4" height="9.8" viewBox="0 0 4.4 9.8"><path d="M2.2 0.2L4.3 4H0.1zM2.2 9.6L4.3 5.8H0.1z" fill="#ccc"/></svg></div>
<div class="b" style="left:501.6px;top:678.3px;width:14.8px;height:14.4px;line-height:15.1px;border-radius:3px 0 0 3px;padding:0"><svg style="left:1.3px;top:1px" width="11" height="11" viewBox="0 0 11 11"><g transform="translate(5.8 5.2) rotate(-135)"><path d="M-2.6 -4V0.4A2.6 2.6 0 0 0 2.6 0.4V-4" stroke="#4a4a4a" stroke-width="3" fill="none"/><path d="M-2.6 -3.8V0.4A2.6 2.6 0 0 0 2.6 0.4V-3.8" stroke="#d2d2d2" stroke-width="1.7" fill="none"/></g></svg></div>
<div class="hb" style="left:515.4px;top:678.3px;width:26.3px;height:14.4px;line-height:15.1px;border-radius:0 3px 3px 0;padding:0"><svg style="left:3.5px;top:1.2px" width="11" height="11" viewBox="0 0 11 11"><path d="M3.5 2V10.5M7.8 2V10.5M1 4.8H10.5M1 8.6H10.5" stroke="#eee" stroke-width="0.9"/><circle cx="3.5" cy="2.8" r="2.3" fill="#2a6be0" stroke="#cfe0ff" stroke-width="0.6"/></svg><svg style="right:1.4px;top:50%;margin-top:-4.9px" width="4.4" height="9.8" viewBox="0 0 4.4 9.8"><path d="M2.2 0.2L4.3 4H0.1zM2.2 9.6L4.3 5.8H0.1z" fill="#ccc"/></svg></div>
<div class="b" style="left:545.8px;top:678.3px;width:14.2px;height:14.4px;line-height:15.1px;border-radius:3px;padding:0"><svg style="left:1px;top:1px" width="11" height="11" viewBox="0 0 11 11"><path d="M9.6 1.4L6.4 4.6M6.2 2V4.8H9" stroke="#3c3c3c" stroke-width="2.4" fill="none"/><path d="M9.6 1.4L6.4 4.6M6.2 2V4.8H9" stroke="#f4f4f4" stroke-width="1.2" fill="none"/><path d="M1.4 9.6L4.6 6.4M2 6.2H4.8V9" stroke="#3c3c3c" stroke-width="2.4" fill="none"/><path d="M1.4 9.6L4.6 6.4M2 6.2H4.8V9" stroke="#f4f4f4" stroke-width="1.2" fill="none"/><rect x="8.6" y="0.2" width="2.2" height="2.2" fill="#e8903a"/><rect x="0.2" y="8.6" width="2.2" height="2.2" fill="#e8903a"/></svg></div>
<div class="b" style="left:564.5px;top:678.3px;width:14.6px;height:14.4px;line-height:15.1px;border-radius:3px 0 0 3px;padding:0"><svg style="left:1.5px;top:1.3px" width="11" height="11" viewBox="0 0 11 11"><rect x="0.6" y="3" width="9.6" height="7" rx="0.8" fill="#3a3a3a" stroke="#111" stroke-width="0.5"/><rect x="1.4" y="1.8" width="3" height="1.6" fill="#555"/><circle cx="5.4" cy="6.6" r="2.6" fill="#ddd" stroke="#222" stroke-width="0.5"/><circle cx="5.4" cy="6.6" r="1.4" fill="#c03030"/><path d="M8.8 0L9.3 1.3L10.8 1.6L9.6 2.4L9.9 3.8L8.8 3L7.7 3.8L8 2.4L6.8 1.6L8.3 1.3z" fill="#f5e060"/></svg></div>
<div class="b" style="left:578.1px;top:678.3px;width:15px;height:14.4px;line-height:15.1px;border-radius:0 3px 3px 0;padding:0"><svg style="left:1.5px;top:1.3px" width="11" height="11" viewBox="0 0 11 11"><rect x="1.4" y="4.8" width="9" height="5.6" fill="#2e2e2e" stroke="#111" stroke-width="0.5"/><path d="M1 3.2L10 1L10.4 2.8L1.4 5z" fill="#eee" stroke="#111" stroke-width="0.5"/><path d="M3 2.8L4 4.4M5.4 2.2L6.4 3.8M7.8 1.6L8.8 3.2" stroke="#111" stroke-width="0.9"/><path d="M2.6 6.6H9.2M2.6 8.4H9.2" stroke="#777" stroke-width="0.6"/><circle cx="1.4" cy="3.4" r="1.2" fill="#3a6bd0"/></svg></div>
<svg style="left:795px;top:660px" width="255" height="20" viewBox="795 660 255 20"><rect x="805" y="304.2" width="234.5" height="369" rx="3.6" fill="none" stroke="#000" stroke-width="6.9"/></svg>
<div class="" style="left:5px;top:696.2px;width:1183.6px;height:36.3px;background:#434343"></div>
<div class="" style="left:207.8px;top:696.2px;width:867px;height:36.3px;background:#747474"></div>
<svg style="left:5px;top:696.2px" width="1183.6" height="36.299999999999955" viewBox="5 696.2 1183.6 36.299999999999955"><path d="M33.4 696.2V732.5M68.2 696.2V732.5M102.9 696.2V732.5M137.6 696.2V732.5M172.3 696.2V732.5M207.0 696.2V732.5M1074.8 696.2V732.5M1109.5 696.2V732.5M1144.2 696.2V732.5M1178.9 696.2V732.5" stroke="#353535" stroke-width="1"/><path d="M16.1 696.2V732.5M50.8 696.2V732.5M85.5 696.2V732.5M120.2 696.2V732.5M154.9 696.2V732.5M189.6 696.2V732.5M1092.2 696.2V732.5M1126.9 696.2V732.5M1161.6 696.2V732.5" stroke="#3d3d3d" stroke-width="1"/><path d="M241.7 696.2V732.5M276.4 696.2V732.5M311.1 696.2V732.5M345.8 696.2V732.5M380.6 696.2V732.5M415.3 696.2V732.5M450.0 696.2V732.5M484.7 696.2V732.5M519.4 696.2V732.5M554.1 696.2V732.5M588.8 696.2V732.5M623.5 696.2V732.5M658.3 696.2V732.5M693.0 696.2V732.5M727.7 696.2V732.5M762.4 696.2V732.5M797.1 696.2V732.5M831.8 696.2V732.5M866.5 696.2V732.5M901.2 696.2V732.5M936.0 696.2V732.5M970.7 696.2V732.5M1005.4 696.2V732.5M1040.1 696.2V732.5" stroke="#5c5c5c" stroke-width="1"/><path d="M224.4 696.2V732.5M259.1 696.2V732.5M293.8 696.2V732.5M328.5 696.2V732.5M363.2 696.2V732.5M397.9 696.2V732.5M432.6 696.2V732.5M467.3 696.2V732.5M502.1 696.2V732.5M536.8 696.2V732.5M571.5 696.2V732.5M606.2 696.2V732.5M640.9 696.2V732.5M675.6 696.2V732.5M710.3 696.2V732.5M745.0 696.2V732.5M779.7 696.2V732.5M814.5 696.2V732.5M849.2 696.2V732.5M883.9 696.2V732.5M918.6 696.2V732.5M953.3 696.2V732.5M988.0 696.2V732.5M1022.7 696.2V732.5M1057.4 696.2V732.5" stroke="#6a6a6a" stroke-width="1"/><path d="M207.0 696.2V732.5" stroke="#2c2c2c" stroke-width="1"/><path d="M210.8 696.2V732.5" stroke="#5dd038" stroke-width="2.6"/></svg>
<svg style="left:1178.5px;top:696.5px" width="10" height="10" viewBox="0 0 10 10"><path d="M2 0L10 8M5 0L10 5M8 0L10 2" stroke="#a4a4a4" stroke-width="0.8" fill="none"/><path d="M3.5 0L10 6.5M6.5 0L10 3.5" stroke="#333" stroke-width="0.8" fill="none"/></svg>
<div class="" style="left:5px;top:732.5px;width:1183.6px;height:13px;background:#727272"></div>
<div class="" style="left:9.5px;top:733.6px;width:1176px;height:8.8px;background:linear-gradient(#a2a2a2,#828282);border:1px solid #5a5a5a;border-radius:4.5px"></div>
<div class="" style="left:9.5px;top:734.6px;width:6.5px;height:6.5px;background:#6c6c6c;border-radius:50%;border:1px solid #585858"></div>
<div class="t" style="left:34.8px;top:733px;transform:translateX(-50%);line-height:10px;font-size:7.6px">-50</div>
<div class="t" style="left:69.28px;top:733px;transform:translateX(-50%);line-height:10px;font-size:7.6px">-40</div>
<div class="t" style="left:103.76px;top:733px;transform:translateX(-50%);line-height:10px;font-size:7.6px">-30</div>
<div class="t" style="left:138.24px;top:733px;transform:translateX(-50%);line-height:10px;font-size:7.6px">-20</div>
<div class="t" style="left:172.72px;top:733px;transform:translateX(-50%);line-height:10px;font-size:7.6px">-10</div>
<div class="t" style="left:208.4px;top:733px;transform:translateX(-50%);line-height:10px;font-size:7.6px">0</div>
<div class="t" style="left:242.88px;top:733px;transform:translateX(-50%);line-height:10px;font-size:7.6px">10</div>
<div class="t" style="left:277.36px;top:733px;transform:translateX(-50%);line-height:10px;font-size:7.6px">20</div>
<div class="t" style="left:311.84px;top:733px;transform:translateX(-50%);line-height:10px;font-size:7.6px">30</div>
<div class="t" style="left:346.32px;top:733px;transform:translateX(-50%);line-height:10px;font-size:7.6px">40</div>
<div class="t" style="left:380.8px;top:733px;transform:translateX(-50%);line-height:10px;font-size:7.6px">50</div>
<div class="t" style="left:415.28px;top:733px;transform:translateX(-50%);line-height:10px;font-size:7.6px">60</div>
<div class="t" style="left:449.76px;top:733px;transform:translateX(-50%);line-height:10px;font-size:7.6px">70</div>
<div class="t" style="left:484.24px;top:733px;transform:translateX(-50%);line-height:10px;font-size:7.6px">80</div>
<div class="t" style="left:518.72px;top:733px;transform:translateX(-50%);line-height:10px;font-size:7.6px">90</div>
<div class="t" style="left:553.2px;top:733px;transform:translateX(-50%);line-height:10px;font-size:7.6px">100</div>
<div class="t" style="left:587.68px;top:733px;transform:translateX(-50%);line-height:10px;font-size:7.6px">110</div>
<div class="t" style="left:622.16px;top:733px;transform:translateX(-50%);line-height:10px;font-size:7.6px">120</div>
<div class="t" style="left:656.64px;top:733px;transform:translateX(-50%);line-height:10px;font-size:7.6px">130</div>
<div class="t" style="left:691.12px;top:733px;transform:translateX(-50%);line-height:10px;font-size:7.6px">140</div>
<div class="t" style="left:725.6px;top:733px;transform:translateX(-50%);line-height:10px;font-size:7.6px">150</div>
<div class="t" style="left:760.08px;top:733px;transform:translateX(-50%);line-height:10px;font-size:7.6px">160</div>
<div class="t" style="left:794.56px;top:733px;transform:translateX(-50%);line-height:10px;font-size:7.6px">170</div>
<div class="t" style="left:829.04px;top:733px;transform:translateX(-50%);line-height:10px;font-size:7.6px">180</div>
<div class="t" style="left:863.52px;top:733px;transform:translateX(-50%);line-height:10px;font-size:7.6px">190</div>
<div class="t" style="left:898px;top:733px;transform:translateX(-50%);line-height:10px;font-size:7.6px">200</div>
<div class="t" style="left:932.48px;top:733px;transform:translateX(-50%);line-height:10px;font-size:7.6px">210</div>
<div class="t" style="left:966.96px;top:733px;transform:translateX(-50%);line-height:10px;font-size:7.6px">220</div>
<div class="t" style="left:1001.44px;top:733px;transform:translateX(-50%);line-height:10px;font-size:7.6px">230</div>
<div class="t" style="left:1035.92px;top:733px;transform:translateX(-50%);line-height:10px;font-size:7.6px">240</div>
<div class="t" style="left:1070.4px;top:733px;transform:translateX(-50%);line-height:10px;font-size:7.6px">250</div>
<div class="t" style="left:1104.88px;top:733px;transform:translateX(-50%);line-height:10px;font-size:7.6px">260</div>
<div class="t" style="left:1139.36px;top:733px;transform:translateX(-50%);line-height:10px;font-size:7.6px">270</div>
<div class="t" style="left:1173.84px;top:733px;transform:translateX(-50%);line-height:10px;font-size:7.6px">280</div>
<div class="" style="left:5px;top:744.6px;width:1183.6px;height:19.6px;background:#6a6a6a;border-top:1px solid #767676"></div>
<svg style="left:5px;top:754.5px" width="10" height="10" viewBox="0 0 10 10"><path d="M0 2L8 10M0 5L5 10M0 8L2 10" stroke="#a4a4a4" stroke-width="0.8" fill="none"/><path d="M0 3.5L6.5 10M0 6.5L3.5 10" stroke="#333" stroke-width="0.8" fill="none"/></svg>
<div class="hb" style="left:12.8px;top:747.2px;width:21.7px;height:14.4px;line-height:15.1px;border-radius:3px;padding:0"><svg style="left:3px;top:1.5px" width="10" height="10" viewBox="0 0 10 10"><circle cx="5" cy="5" r="4.4" fill="#eee" stroke="#444" stroke-width="0.6"/><path d="M5 5V1.6M5 5L7.4 6.6" stroke="#c33" stroke-width="0.9" fill="none"/></svg><svg style="right:1.2px;top:50%;margin-top:-4.9px" width="4.4" height="9.8" viewBox="0 0 4.4 9.8"><path d="M2.2 0.2L4.3 4H0.1zM2.2 9.6L4.3 5.8H0.1z" fill="#ccc"/></svg></div>
<div class="t" style="left:53.2px;top:750px;transform:translateX(-50%)">View</div>
<div class="t" style="left:89.6px;top:750px;transform:translateX(-50%)">Marker</div>
<div class="t" style="left:129px;top:750px;transform:translateX(-50%)">Frame</div>
<div class="t" style="left:172.2px;top:750px;transform:translateX(-50%)">Playback</div>
<div class="b" style="left:198.5px;top:747.2px;width:15.2px;height:14.4px;line-height:15.1px;border-radius:3px 0 0 3px;padding:0"><svg style="left:2px;top:1.3px" width="10" height="10" viewBox="0 0 10 10"><circle cx="5" cy="5" r="4.3" fill="#eee" stroke="#444" stroke-width="0.6"/><path d="M5 5V0.9A4.1 4.1 0 0 1 9.1 5z" fill="#f08a1a"/><path d="M5 5V1.4M5 5H8.4" stroke="#a33" stroke-width="0.6"/></svg></div>
<div class="b" style="left:212.7px;top:747.2px;width:14.6px;height:14.4px;line-height:15.1px;border-radius:0 3px 3px 0;padding:0"><svg style="left:2.3px;top:1.2px" width="9" height="10" viewBox="0 0 9 10"><path d="M2.3 4.6V3Q2.3 0.9 4.5 0.9Q6.7 0.9 6.7 3V4.6" stroke="#eee" stroke-width="1.1" fill="none"/><rect x="1" y="4.4" width="7" height="5" fill="#f0f0f0" stroke="#555" stroke-width="0.6"/><rect x="3.2" y="6" width="2.6" height="1.8" fill="#999"/></svg></div>
<div class="n" style="left:232.2px;top:747.2px;width:85.8px;height:14.4px;line-height:15.1px;border-radius:7px 0 0 7px;padding-left:11px;">Start:<svg style="left:4px;top:50%;margin-top:-2.5px" width="3" height="5" viewBox="0 0 3 5"><path d="M3 0L0 2.5L3 5z" fill="#7d7d7d"/></svg><svg style="right:4px;top:50%;margin-top:-2.5px" width="3" height="5" viewBox="0 0 3 5"><path d="M0 0L3 2.5L0 5z" fill="#7d7d7d"/></svg><span style="position:absolute;right:11px;top:0;font-size:7.9px">1</span></div>
<div class="n" style="left:317px;top:747.2px;width:82.8px;height:14.4px;line-height:15.1px;border-radius:0 7px 7px 0;padding-left:11px;">End:<svg style="left:4px;top:50%;margin-top:-2.5px" width="3" height="5" viewBox="0 0 3 5"><path d="M3 0L0 2.5L3 5z" fill="#7d7d7d"/></svg><svg style="right:4px;top:50%;margin-top:-2.5px" width="3" height="5" viewBox="0 0 3 5"><path d="M0 0L3 2.5L0 5z" fill="#7d7d7d"/></svg><span style="position:absolute;right:11px;top:0;font-size:7.9px">250</span></div>
<div class="n" style="left:404px;top:747.2px;width:65.8px;height:14.4px;line-height:15.1px;border-radius:7.2px;padding-left:11px;"><svg style="left:4px;top:50%;margin-top:-2.5px" width="3" height="5" viewBox="0 0 3 5"><path d="M3 0L0 2.5L3 5z" fill="#7d7d7d"/></svg><svg style="right:4px;top:50%;margin-top:-2.5px" width="3" height="5" viewBox="0 0 3 5"><path d="M0 0L3 2.5L0 5z" fill="#7d7d7d"/></svg><span style="position:absolute;right:11px;top:0;font-size:7.9px">1</span></div>
<div class="b" style="left:482.2px;top:747.2px;width:15.6px;height:14.4px;line-height:15.1px;border-radius:3px 0 0 3px;padding:0"><svg style="left:1.6px;top:0.6px" width="11" height="11" viewBox="0 0 11 11"><rect x="0.6" y="1.4" width="1.5" height="8.2" fill="#f0f0f0" stroke="#2e2e2e" stroke-width="0.7" stroke-linejoin="round"/><path d="M6 1.4V9.6L2.3 5.5zM10.4 1.4V9.6L6.4 5.5z" fill="#f0f0f0" stroke="#2e2e2e" stroke-width="0.7" stroke-linejoin="round"/></svg></div>
<div class="b" style="left:496.8px;top:747.2px;width:15.6px;height:14.4px;line-height:15.1px;border-radius:0;padding:0"><svg style="left:1.6px;top:0.6px" width="11" height="11" viewBox="0 0 11 11"><path d="M5.6 1.4V9.6L0.8 5.5zM10.4 1.4V9.6L5.8 5.5z" fill="#f0f0f0" stroke="#2e2e2e" stroke-width="0.7" stroke-linejoin="round"/></svg></div>
<div class="b" style="left:511.4px;top:747.2px;width:15.6px;height:14.4px;line-height:15.1px;border-radius:0;padding:0"><svg style="left:1.6px;top:0.6px" width="11" height="11" viewBox="0 0 11 11"><path d="M9.6 0.6V10.4L1 5.5z" fill="#f0f0f0" stroke="#2e2e2e" stroke-width="0.7" stroke-linejoin="round"/></svg></div>
<div class="b" style="left:526px;top:747.2px;width:15.6px;height:14.4px;line-height:15.1px;border-radius:0;padding:0"><svg style="left:1.6px;top:0.6px" width="11" height="11" viewBox="0 0 11 11"><path d="M1.4 0.6V10.4L10 5.5z" fill="#f0f0f0" stroke="#2e2e2e" stroke-width="0.7" stroke-linejoin="round"/></svg></div>
<div class="b" style="left:540.6px;top:747.2px;width:15.6px;height:14.4px;line-height:15.1px;border-radius:0;padding:0"><svg style="left:1.6px;top:0.6px" width="11" height="11" viewBox="0 0 11 11"><path d="M0.6 1.4V9.6L5.2 5.5zM5.4 1.4V9.6L10.2 5.5z" fill="#f0f0f0" stroke="#2e2e2e" stroke-width="0.7" stroke-linejoin="round"/></svg></div>
<div class="b" style="left:555.2px;top:747.2px;width:15.6px;height:14.4px;line-height:15.1px;border-radius:0 3px 3px 0;padding:0"><svg style="left:1.6px;top:0.6px" width="11" height="11" viewBox="0 0 11 11"><rect x="8.9" y="1.4" width="1.5" height="8.2" fill="#f0f0f0" stroke="#2e2e2e" stroke-width="0.7" stroke-linejoin="round"/><path d="M0.6 1.4V9.6L4.6 5.5zM5 1.4V9.6L8.7 5.5z" fill="#f0f0f0" stroke="#2e2e2e" stroke-width="0.7" stroke-linejoin="round"/></svg></div>
<div class="m" style="left:574.3px;top:747.2px;width:84.6px;height:14.4px;line-height:15.1px;border-radius:3px;padding-left:6px">No Sync<svg style="right:1.4px;top:50%;margin-top:-4.9px" width="4.4" height="9.8" viewBox="0 0 4.4 9.8"><path d="M2.2 0.2L4.3 4H0.1zM2.2 9.6L4.3 5.8H0.1z" fill="#ccc"/></svg></div>
<div class="b" style="left:671.6px;top:747.2px;width:14px;height:14.4px;line-height:15.1px;border-radius:3px;padding:0"><svg style="left:2.5px;top:2.5px" width="7" height="7" viewBox="0 0 7 7"><circle cx="3.5" cy="3.5" r="3" fill="#e8401a" stroke="#a22" stroke-width="0.5"/></svg></div>
<div class="f" style="left:689.6px;top:747.2px;width:96.6px;height:14.4px;line-height:15.1px;border-radius:3px 0 0 3px;padding:0"><svg style="left:2.5px;top:1px" width="11" height="11" viewBox="0 0 11 11"><circle cx="3.2" cy="7.8" r="2.2" fill="none" stroke="#e8d24a" stroke-width="1.2"/><path d="M4.8 6.2L9.6 1.4M8 3L9.4 4.4" stroke="#f2f2f2" stroke-width="1.2" fill="none"/><path d="M2 1H5.2M3.4 1V5.6" stroke="#e8d24a" stroke-width="1.1"/></svg></div>
<div class="b" style="left:785.2px;top:747.2px;width:15.8px;height:14.4px;line-height:15.1px;border-radius:0;padding:0"><svg style="left:1.8px;top:1px" width="11" height="11" viewBox="0 0 11 11"><circle cx="3.2" cy="7.8" r="2.2" fill="none" stroke="#f0f0f0" stroke-width="1.2"/><path d="M4.8 6.2L9.6 1.4M8 3L9.4 4.4" stroke="#f0f0f0" stroke-width="1.2" fill="none"/></svg></div>
<div class="b" style="left:800px;top:747.2px;width:15.2px;height:14.4px;line-height:15.1px;border-radius:0 3px 3px 0;padding:0"><svg style="left:1.5px;top:1px" width="11" height="11" viewBox="0 0 11 11"><circle cx="3.2" cy="7.8" r="2.2" fill="none" stroke="#f0f0f0" stroke-width="1.2"/><path d="M4.8 6.2L9.6 1.4M8 3L9.4 4.4" stroke="#f0f0f0" stroke-width="1.2" fill="none"/><path d="M1.5 1.5L9.5 9.5" stroke="#d8201a" stroke-width="1.4"/></svg></div>
<div class="" style="left:1190.2px;top:42px;width:221.8px;height:19px;background:#727272"></div>
<div class="" style="left:1190.2px;top:61px;width:221.8px;height:157px;background:#727272"></div>
<div class="" style="left:1190.2px;top:76.51px;width:221.8px;height:14.66px;background:#797979"></div>
<div class="" style="left:1190.2px;top:105.83px;width:221.8px;height:14.66px;background:#797979"></div>
<div class="" style="left:1190.2px;top:135.15px;width:221.8px;height:14.66px;background:#797979"></div>
<div class="" style="left:1190.2px;top:164.47px;width:221.8px;height:14.66px;background:#797979"></div>
<div class="" style="left:1190.2px;top:193.79px;width:221.8px;height:11.71px;background:#797979"></div>
<div class="" style="left:1190.2px;top:61px;width:221.8px;height:1px;background:#666"></div>
<div class="" style="left:1367.3px;top:62px;width:1px;height:143.5px;background:#676767"></div>
<div class="" style="left:1382.2px;top:62px;width:1px;height:143.5px;background:#676767"></div>
<div class="" style="left:1396.7px;top:62px;width:1px;height:143.5px;background:#676767"></div>
<div class="hb" style="left:1197.2px;top:44.4px;width:21.7px;height:13.9px;line-height:14.6px;border-radius:3px;padding:0"><svg style="left:3px;top:1.4px" width="11" height="10" viewBox="0 0 11 10"><path d="M2.2 1.6V8.4H5.4M2.2 4.8H5.4" stroke="#ddd" stroke-width="0.8" fill="none"/><rect x="0.6" y="0.3" width="4" height="1.8" fill="#f0a23a"/><rect x="5.6" y="3.9" width="4.4" height="1.6" fill="#eee"/><rect x="5.6" y="7.5" width="4.4" height="1.6" fill="#eee"/></svg><svg style="right:1.2px;top:50%;margin-top:-4.9px" width="4.4" height="9.8" viewBox="0 0 4.4 9.8"><path d="M2.2 0.2L4.3 4H0.1zM2.2 9.6L4.3 5.8H0.1z" fill="#ccc"/></svg></div>
<div class="t" style="left:1237.7px;top:46px;transform:translateX(-50%)">View</div>
<div class="t" style="left:1274.1px;top:46px;transform:translateX(-50%)">Search</div>
<div class="m" style="left:1296.2px;top:44.4px;width:87.4px;height:13.9px;line-height:14.6px;border-radius:3px;padding-left:5px">All Scenes<svg style="right:1.4px;top:50%;margin-top:-4.9px" width="4.4" height="9.8" viewBox="0 0 4.4 9.8"><path d="M2.2 0.2L4.3 4H0.1zM2.2 9.6L4.3 5.8H0.1z" fill="#ccc"/></svg></div>
<div class="b" style="left:1387.9px;top:44.4px;width:24.1px;height:13.9px;line-height:14.6px;border-radius:3px 0 0 3px;padding:0;border-right:none"><svg style="left:3px;top:0.5px" width="12" height="12" viewBox="0 0 12 12"><path d="M1 10.8L4.6 7.2" stroke="#7a4a1a" stroke-width="2.2"/><path d="M1 10.8L4.6 7.2" stroke="#e8903a" stroke-width="1.2"/><circle cx="7" cy="4.6" r="3.4" fill="#e8dede" fill-opacity=".8" stroke="#444" stroke-width="0.8"/></svg></div>
<svg style="left:1402px;top:42px" width="10" height="10" viewBox="0 0 10 10"><path d="M2 0L10 8M5 0L10 5M8 0L10 2" stroke="#a4a4a4" stroke-width="0.8" fill="none"/><path d="M3.5 0L10 6.5M6.5 0L10 3.5" stroke="#333" stroke-width="0.8" fill="none"/></svg>
<svg style="left:1190.2px;top:62px" width="222" height="144" viewBox="1190.2 62 222 144"><path d="M1199.5 69.5H1207M1210.5 76V113.5H1221M1225.5 120V143.5H1236" stroke="#333" stroke-width="1" fill="none" opacity=".75"/><circle cx="1196.4" cy="69.6" r="3.1" fill="#ececec" stroke="#2a2a2a" stroke-width="0.7"/><path d="M1194.6000000000001 69.6H1198.2" stroke="#111" stroke-width="0.9"/><circle cx="1215.2" cy="84.1" r="3.1" fill="#ececec" stroke="#2a2a2a" stroke-width="0.7"/><path d="M1213.4 84.1H1217.0" stroke="#111" stroke-width="0.9"/><path d="M1215.2 82.3V85.89999999999999" stroke="#111" stroke-width="0.9"/><circle cx="1211.3" cy="113.6" r="3.1" fill="#ececec" stroke="#2a2a2a" stroke-width="0.7"/><path d="M1209.5 113.6H1213.1" stroke="#111" stroke-width="0.9"/><circle cx="1229.6" cy="128.1" r="3.1" fill="#ececec" stroke="#2a2a2a" stroke-width="0.7"/><path d="M1227.8 128.1H1231.3999999999999" stroke="#111" stroke-width="0.9"/><path d="M1229.6 126.3V129.9" stroke="#111" stroke-width="0.9"/><defs><radialGradient id="matg" cx="0.38" cy="0.32" r="0.75"><stop offset="0" stop-color="#c6c6c6"/><stop offset="0.5" stop-color="#8c8484"/><stop offset="0.8" stop-color="#a06a5c"/><stop offset="1" stop-color="#6a5650"/></radialGradient></defs><g transform="translate(1212.4 69.4)"><circle cx="0" cy="0" r="6.2" fill="#9a9a9a" opacity=".55"/><circle cx="-1.4" cy="1.8" r="2.9" fill="#eee" stroke="#555" stroke-width="0.5"/><path d="M0.4 -3.6L3.8 -4.4L4.2 0.6L0.9 0.9z" fill="#3f74d0" stroke="#dde" stroke-width="0.4"/><path d="M-3.5 -4.2L-3 -3L-1.8 -2.8L-2.8 -2.1L-2.6 -0.9L-3.5 -1.6L-4.5 -1L-4.2 -2.1L-5 -2.9L-3.9 -3z" fill="#f5e04a"/></g><g transform="translate(1227.2 84.1)"><rect x="-3.2" y="-3" width="7.4" height="7.4" fill="#d8d2b8" stroke="#444" stroke-width="0.5" transform="rotate(8)"/><rect x="-4.6" y="-4.8" width="7.6" height="7.6" fill="#f2f2f2" stroke="#444" stroke-width="0.5"/><path d="M-1.8 -3.4Q1.4 -4 1 -1.2Q0.8 0.4 -0.6 0.6L-0.6 1.4" stroke="#3f74d0" stroke-width="1.3" fill="none"/></g><g transform="translate(1307 84.1)"><circle r="6" fill="#aaa" opacity=".5"/><rect x="-3.2" y="-3" width="7.4" height="7.4" fill="#d8d2b8" stroke="#444" stroke-width="0.5" transform="rotate(8)"/><rect x="-4.6" y="-4.8" width="7.6" height="7.6" fill="#f2f2f2" stroke="#444" stroke-width="0.5"/><path d="M-1.8 -3.4Q1.4 -4 1 -1.2Q0.8 0.4 -0.6 0.6L-0.6 1.4" stroke="#3f74d0" stroke-width="1.3" fill="none"/></g><g transform="translate(1227.2 98.8)"><circle r="5.3" fill="#c8c8c8" opacity=".6"/><circle r="4.3" fill="#3f6fc0" stroke="#223" stroke-width="0.5"/><path d="M-3 -2.4Q-1 -4 0.6 -2.6Q0 -0.8 -1.6 -0.2Q-3 0.6 -3.6 -0.6zM0.6 0.6Q2.6 -0.4 3.6 1.2Q2.8 3.4 1 3.6Q0 2 0.6 0.6z" fill="#5cae3c"/></g><g transform="translate(1227.2 113.4)"><circle r="6.6" fill="#e09448" opacity=".66"/><path d="M-4.3 -3.6H4.3L0 4.4z" fill="none" stroke="#c85a10" stroke-width="1.9" stroke-linejoin="round"/><path d="M-4.3 -3.6H4.3L0 4.4z" fill="none" stroke="#fff" stroke-width="0.8" stroke-linejoin="round"/></g><g transform="translate(1242 128.1)"><circle r="6.5" fill="#b0b0b0" opacity=".7"/><path d="M-4 -3.8H4L0 4.2zM-4 -3.8L0 -0.8L4 -3.8M0 -0.8V4.2" fill="none" stroke="#222" stroke-width="1.3"/><path d="M-4 -3.8H4L0 4.2zM-4 -3.8L0 -0.8L4 -3.8M0 -0.8V4.2" fill="none" stroke="#f4f4f4" stroke-width="0.6"/><circle cx="-4" cy="-3.8" r="1.1" fill="#eee" stroke="#222" stroke-width="0.4"/><circle cx="4" cy="-3.8" r="1.1" fill="#eee" stroke="#222" stroke-width="0.4"/><circle cx="0" cy="4.2" r="1.1" fill="#eee" stroke="#222" stroke-width="0.4"/><circle cx="0" cy="-0.8" r="1" fill="#eee" stroke="#222" stroke-width="0.4"/></g><g transform="translate(1242 143)"><circle r="6.6" fill="#c96a30"/><path d="M0 -4.6V0.6L-4 3.8M0 0.6L4 3.8" stroke="#7a3208" stroke-width="2.6" fill="none" stroke-linecap="round"/><path d="M0 -4.6V0.6L-4 3.8M0 0.6L4 3.8" stroke="#f7b23a" stroke-width="1.3" fill="none" stroke-linecap="round"/></g><g transform="translate(1301.7 127.8)"><circle r="4.7" fill="#8a8a8a" stroke="#5a5a5a" stroke-width="0.5"/><circle r="4.2" fill="url(#matg)"/></g><g transform="translate(1316.6 127.8)"><circle r="4.7" fill="#8a8a8a" stroke="#5a5a5a" stroke-width="0.5"/><circle r="4.2" fill="url(#matg)"/></g><g transform="translate(1331.3 127.8)"><circle r="4.7" fill="#8a8a8a" stroke="#5a5a5a" stroke-width="0.5"/><circle r="4.2" fill="url(#matg)"/></g><g transform="translate(1346.2 127.8)"><circle r="4.7" fill="#8a8a8a" stroke="#5a5a5a" stroke-width="0.5"/><circle r="4.2" fill="url(#matg)"/></g><g transform="translate(1361 127.8)"><circle r="4.7" fill="#8a8a8a" stroke="#5a5a5a" stroke-width="0.5"/><circle r="4.2" fill="url(#matg)"/></g><path d="M1293.8 80V88.5M1288.8 124V132.5" stroke="#2a2a2a" stroke-width="0.8"/><g transform="translate(1375 113.2)"><path d="M-5 0.2Q0 -5 5 0.2Q0 4.2 -5 0.2z" fill="#f6f6f6" stroke="#2a2a2a" stroke-width="0.8"/><ellipse cx="0" cy="-0.1" rx="1.9" ry="1.8" fill="#555"/><circle cx="0" cy="-0.1" r="0.8" fill="#222"/></g><g transform="translate(1390 113.2)"><path d="M-2.6 -4.8V3.4L-0.6 1.6L1 5L2.4 4.3L0.9 1L3.4 0.9z" fill="#f4f4f4" stroke="#111" stroke-width="0.7" stroke-linejoin="round"/></g><g transform="translate(1404 113.2)"><rect x="-4.4" y="-2.6" width="8.8" height="6.6" rx="0.6" fill="#3a3a3a" stroke="#e8e8e8" stroke-width="0.8"/><rect x="-3.6" y="-4" width="2.8" height="1.4" fill="#e8e8e8"/><circle cx="0.4" cy="0.8" r="2.2" fill="#ddd" stroke="#222" stroke-width="0.4"/><circle cx="0.4" cy="0.8" r="1.1" fill="#b03030"/></g><g transform="translate(1375 142.5)"><path d="M-5 0.2Q0 -5 5 0.2Q0 4.2 -5 0.2z" fill="#f6f6f6" stroke="#2a2a2a" stroke-width="0.8"/><ellipse cx="0" cy="-0.1" rx="1.9" ry="1.8" fill="#555"/><circle cx="0" cy="-0.1" r="0.8" fill="#222"/></g><g transform="translate(1390 142.5)"><path d="M-2.6 -4.8V3.4L-0.6 1.6L1 5L2.4 4.3L0.9 1L3.4 0.9z" fill="#f4f4f4" stroke="#111" stroke-width="0.7" stroke-linejoin="round"/></g><g transform="translate(1404 142.5)"><rect x="-4.4" y="-2.6" width="8.8" height="6.6" rx="0.6" fill="#3a3a3a" stroke="#e8e8e8" stroke-width="0.8"/><rect x="-3.6" y="-4" width="2.8" height="1.4" fill="#e8e8e8"/><circle cx="0.4" cy="0.8" r="2.2" fill="#ddd" stroke="#222" stroke-width="0.4"/><circle cx="0.4" cy="0.8" r="1.1" fill="#b03030"/></g></svg>
<div class="t" style="left:1220.8px;top:64px;">Scene</div>
<div class="t" style="left:1235.7px;top:79px;">RenderLayers</div>
<div class="t" style="left:1235.7px;top:93px;">World</div>
<div class="t w" style="left:1235.7px;top:108px;">Satellite</div>
<div class="t" style="left:1250.6px;top:123px;">Satellite</div>
<div class="t" style="left:1250.6px;top:138px;">Solar_Panels</div>
<div class="" style="left:1193.5px;top:205.3px;width:213.5px;height:9.2px;background:linear-gradient(#575757,#636363);border-radius:4px;border:1px solid #4c4c4c"></div>
<div class="" style="left:1193.5px;top:205.3px;width:199px;height:9.2px;background:linear-gradient(#9a9a9a,#7c7c7c);border-radius:4px;border:1px solid #4a4a4a"></div>
<svg style="left:1190.5px;top:207px" width="10" height="10" viewBox="0 0 10 10"><path d="M0 2L8 10M0 5L5 10M0 8L2 10" stroke="#a4a4a4" stroke-width="0.8" fill="none"/><path d="M0 3.5L6.5 10M0 6.5L3.5 10" stroke="#333" stroke-width="0.8" fill="none"/></svg>
<div class="" style="left:1190.2px;top:217px;width:221.8px;height:1.2px;background:#1f1f1f"></div>
<div class="" style="left:1190.2px;top:218.2px;width:221.8px;height:546px;background:#727272"></div>
<svg style="left:1402px;top:218.5px" width="10" height="10" viewBox="0 0 10 10"><path d="M2 0L10 8M5 0L10 5M8 0L10 2" stroke="#a4a4a4" stroke-width="0.8" fill="none"/><path d="M3.5 0L10 6.5M6.5 0L10 3.5" stroke="#333" stroke-width="0.8" fill="none"/></svg>
<svg style="left:1190.5px;top:755px" width="10" height="10" viewBox="0 0 10 10"><path d="M0 2L8 10M0 5L5 10M0 8L2 10" stroke="#a4a4a4" stroke-width="0.8" fill="none"/><path d="M0 3.5L6.5 10M0 6.5L3.5 10" stroke="#333" stroke-width="0.8" fill="none"/></svg>
<div class="hb" style="left:1197px;top:221.2px;width:21.8px;height:14px;line-height:14.7px;border-radius:3px;padding:0"><svg style="left:3px;top:1.6px" width="11" height="10" viewBox="0 0 11 10"><rect x="0.5" y="1" width="9.6" height="3.2" fill="#eee" stroke="#333" stroke-width="0.5"/><rect x="0.5" y="5.4" width="9.6" height="3.2" fill="#eee" stroke="#333" stroke-width="0.5"/><rect x="6" y="1.6" width="2.4" height="2" fill="#555"/><rect x="2.4" y="6" width="2.4" height="2" fill="#555"/></svg><svg style="right:1.2px;top:50%;margin-top:-4.9px" width="4.4" height="9.8" viewBox="0 0 4.4 9.8"><path d="M2.2 0.2L4.3 4H0.1zM2.2 9.6L4.3 5.8H0.1z" fill="#ccc"/></svg></div>
<svg width="0" height="0"><defs><radialGradient id="matg2" cx="0.38" cy="0.32" r="0.75"><stop offset="0" stop-color="#d6d6d6"/><stop offset="0.5" stop-color="#8c8484"/><stop offset="0.8" stop-color="#b0705c"/><stop offset="1" stop-color="#5a4640"/></radialGradient></defs></svg>
<div class="hb" style="left:1225.4px;top:221.2px;width:15.7px;height:14px;line-height:14.7px;border-radius:3px 0 0 3px;padding:0;"><svg style="left:1.6px;top:0.7px;opacity:.85" width="11" height="11" viewBox="0 0 11 11"><rect x="0.8" y="3" width="9.4" height="6.6" rx="0.8" fill="#6e6e6e" stroke="#bdbdbd" stroke-width="0.6"/><rect x="1.4" y="1.6" width="3.4" height="1.8" fill="#d8d8d8"/><circle cx="5.8" cy="6.4" r="2.5" fill="#8a8a8a" stroke="#3a3a3a" stroke-width="0.5"/><circle cx="5.8" cy="6.4" r="1.3" fill="#b83a3a"/></svg></div>
<div class="hb" style="left:1240.1px;top:221.2px;width:15.7px;height:14px;line-height:14.7px;border-radius:0;padding:0;"><svg style="left:1.6px;top:0.7px;opacity:.85" width="11" height="11" viewBox="0 0 11 11"><rect x="2.6" y="2.6" width="7.4" height="7.4" fill="#d8d2b8" stroke="#444" stroke-width="0.5"/><rect x="0.8" y="0.8" width="7.6" height="7.6" fill="#f2f2f2" stroke="#444" stroke-width="0.5"/><path d="M3 2.4Q6.2 1.8 5.8 4.4Q5.6 5.6 4.4 5.8V6.6" stroke="#3f74d0" stroke-width="1.2" fill="none"/></svg></div>
<div class="hb" style="left:1254.8px;top:221.2px;width:15.7px;height:14px;line-height:14.7px;border-radius:0;padding:0;"><svg style="left:1.6px;top:0.7px;opacity:.85" width="11" height="11" viewBox="0 0 11 11"><circle cx="4" cy="7.2" r="2.9" fill="#eee" stroke="#555" stroke-width="0.5"/><path d="M5.8 1.8L9.4 1L9.8 6L6.4 6.3z" fill="#3f74d0" stroke="#dde" stroke-width="0.4"/><path d="M2 0.6L2.5 1.8L3.7 2L2.7 2.7L2.9 3.9L2 3.2L1 3.8L1.3 2.7L0.5 1.9L1.6 1.8z" fill="#f5e04a"/></svg></div>
<div class="hb" style="left:1269.5px;top:221.2px;width:15.7px;height:14px;line-height:14.7px;border-radius:0;padding:0;"><svg style="left:1.6px;top:0.7px;opacity:.85" width="11" height="11" viewBox="0 0 11 11"><circle cx="5.5" cy="5.5" r="4.4" fill="#3f6fc0" stroke="#223" stroke-width="0.5"/><path d="M2.4 3Q4.4 1.4 6 2.8Q5.4 4.6 3.8 5.2Q2.4 6 1.8 4.8zM6 6Q8 5 9 6.6Q8.2 8.8 6.4 9Q5.4 7.4 6 6z" fill="#5cae3c"/></svg></div>
<div class="hb" style="left:1284.2px;top:221.2px;width:15.7px;height:14px;line-height:14.7px;border-radius:0;padding:0;"><svg style="left:1.6px;top:0.7px;opacity:.85" width="11" height="11" viewBox="0 0 11 11"><path d="M5.5 0.8L10 2.8V8L5.5 10.2L1 8V2.8z" fill="#e8903a" stroke="#7a4a1a" stroke-width="0.5"/><path d="M5.5 0.8L10 2.8L5.5 5L1 2.8z" fill="#fbd9a8"/><path d="M5.5 5V10.2L1 8V2.8z" fill="#f4b060"/></svg></div>
<div class="hb" style="left:1298.9px;top:221.2px;width:15.7px;height:14px;line-height:14.7px;border-radius:0;padding:0;"><svg style="left:1.6px;top:0.7px;opacity:.85" width="11" height="11" viewBox="0 0 11 11"><path d="M4.8 6.2L3.6 7.4Q2.4 8.6 1.4 7.6Q0.4 6.6 1.6 5.4L3.4 3.6Q4.6 2.6 5.6 3.6M6.2 4.8L7.4 3.6Q8.6 2.4 9.6 3.4Q10.6 4.4 9.4 5.6L7.6 7.4Q6.4 8.4 5.4 7.4" stroke="#333" stroke-width="2.4" fill="none"/><path d="M4.8 6.2L3.6 7.4Q2.4 8.6 1.4 7.6Q0.4 6.6 1.6 5.4L3.4 3.6Q4.6 2.6 5.6 3.6M6.2 4.8L7.4 3.6Q8.6 2.4 9.6 3.4Q10.6 4.4 9.4 5.6L7.6 7.4Q6.4 8.4 5.4 7.4" stroke="#e2e2e2" stroke-width="1.2" fill="none"/></svg></div>
<div class="hb" style="left:1313.6px;top:221.2px;width:15.7px;height:14px;line-height:14.7px;border-radius:0;padding:0;background:linear-gradient(#6390d4,#5680c2)"><svg style="left:1.6px;top:0.7px;opacity:1" width="11" height="11" viewBox="0 0 11 11"><path d="M1.4 9.8L6 5.2Q5.2 3 6.8 1.6Q8.2 0.6 9.6 1.2L7.6 3.2L8 4.2L9 4.6L10.8 2.6Q11 4.6 9.6 5.6Q8.2 6.4 7 6.2L2.6 10.8Q1.8 11 1.4 9.8z" fill="#eef2fa" stroke="#2d4f8f" stroke-width="0.6"/></svg></div>
<div class="hb" style="left:1328.3px;top:221.2px;width:15.7px;height:14px;line-height:14.7px;border-radius:0;padding:0;"><svg style="left:1.6px;top:0.7px;opacity:.85" width="11" height="11" viewBox="0 0 11 11"><path d="M1.2 1.6H9.8L5.5 9.8z" fill="none" stroke="#d0d0d0" stroke-width="0.7"/><circle cx="1.4" cy="1.6" r="1" fill="#eee" stroke="#222" stroke-width="0.4"/><circle cx="9.6" cy="1.6" r="1" fill="#eee" stroke="#222" stroke-width="0.4"/><circle cx="5.5" cy="9.6" r="1" fill="#eee" stroke="#222" stroke-width="0.4"/></svg></div>
<div class="hb" style="left:1343px;top:221.2px;width:15.7px;height:14px;line-height:14.7px;border-radius:0;padding:0;"><svg style="left:1.6px;top:0.7px;opacity:.85" width="11" height="11" viewBox="0 0 11 11"><circle cx="5.5" cy="5.5" r="4.5" fill="url(#matg2)" stroke="#444" stroke-width="0.5"/></svg></div>
<div class="hb" style="left:1357.7px;top:221.2px;width:15.7px;height:14px;line-height:14.7px;border-radius:0;padding:0;"><svg style="left:1.6px;top:0.7px;opacity:.85" width="11" height="11" viewBox="0 0 11 11"><rect x="0.8" y="0.8" width="9.4" height="9.4" fill="#f2f2f2" stroke="#444" stroke-width="0.5"/><path d="M0.8 0.8h3.1v3.1h-3.1zM7 0.8h3.2v3.1H7zM3.9 3.9H7V7H3.9zM0.8 7h3.1v3.2h-3.1zM7 7h3.2v3.2H7z" fill="#b03a2a"/></svg></div>
<div class="hb" style="left:1372.4px;top:221.2px;width:15.7px;height:14px;line-height:14.7px;border-radius:0;padding:0;"><svg style="left:1.6px;top:0.7px;opacity:.85" width="11" height="11" viewBox="0 0 11 11"><path d="M3 0.2L3.4 2.6L5.8 3L3.4 3.4L3 5.8L2.6 3.4L0.2 3L2.6 2.6zM8 0.2L8.4 2.6L10.8 3L8.4 3.4L8 5.8L7.6 3.4L5.2 3L7.6 2.6zM3 5.2L3.4 7.6L5.8 8L3.4 8.4L3 10.8L2.6 8.4L0.2 8L2.6 7.6zM8 5.2L8.4 7.6L10.8 8L8.4 8.4L8 10.8L7.6 8.4L5.2 8L7.6 7.6z" fill="#efe2a0" stroke="#c8b050" stroke-width="0.3"/></svg></div>
<div class="hb" style="left:1387.1px;top:221.2px;width:14.7px;height:14px;line-height:14.7px;border-radius:0 3px 3px 0;padding:0;"><svg style="left:1.6px;top:0.7px;opacity:.85" width="11" height="11" viewBox="0 0 11 11"><path d="M1 4.6L3.6 7.6L6 3" stroke="#2d4f8f" stroke-width="2.2" fill="none"/><path d="M1 4.6L3.6 7.6L6 3" stroke="#5b8ee0" stroke-width="1.1" fill="none"/><circle cx="7.8" cy="2.8" r="2.2" fill="#e8e8e8" stroke="#666" stroke-width="0.5"/></svg></div>
<svg style="left:1196px;top:244px" width="70" height="14" viewBox="0 0 70 14"><path d="M1.4 12.6L5.8 8.2" stroke="#333" stroke-width="1.8"/><path d="M1.4 12.6L5.8 8.2" stroke="#e4e4e4" stroke-width="0.9"/><path d="M4.4 4.6L9.4 9.6L10.4 8.6L9.2 6.8L11.8 3.8L12.6 4.2L13.4 3.2L10 0L9.2 0.8L9.6 1.6L6.6 4.2L5.4 3.6z" fill="#e0e0e0" stroke="#2e2e2e" stroke-width="0.6"/><g transform="translate(18.5 1.5)"><circle cx="4" cy="7.2" r="2.9" fill="#eee" stroke="#555" stroke-width="0.5"/><path d="M5.8 1.8L9.4 1L9.8 6L6.4 6.3z" fill="#3f74d0" stroke="#dde" stroke-width="0.4"/><path d="M2 0.6L2.5 1.8L3.7 2L2.7 2.7L2.9 3.9L2 3.2L1 3.8L1.3 2.7L0.5 1.9L1.6 1.8z" fill="#f5e04a"/></g><path d="M33.5 4.8L36.3 7L33.5 9.2z" fill="#3a3a3a"/><g transform="translate(48.5 1.5)"><path d="M5.5 0.8L10 2.8V8L5.5 10.2L1 8V2.8z" fill="#e8903a" stroke="#7a4a1a" stroke-width="0.5"/><path d="M5.5 0.8L10 2.8L5.5 5L1 2.8z" fill="#fbd9a8"/><path d="M5.5 5V10.2L1 8V2.8z" fill="#f4b060"/></g></svg>
<div class="t" style="left:1258.6px;top:246px;">Satellite</div>
<div class="m" style="left:1196.4px;top:270.3px;width:208.6px;height:14px;line-height:14.7px;border-radius:3px;padding-left:4.6px">Add Modifier<svg style="right:1.4px;top:50%;margin-top:-4.9px" width="4.4" height="9.8" viewBox="0 0 4.4 9.8"><path d="M2.2 0.2L4.3 4H0.1zM2.2 9.6L4.3 5.8H0.1z" fill="#ccc"/></svg></div>
<div style="left:5px;top:20px;width:1407px;height:745px;border:1px solid rgba(45,35,35,.62);pointer-events:none"></div>
</div></body></html>
